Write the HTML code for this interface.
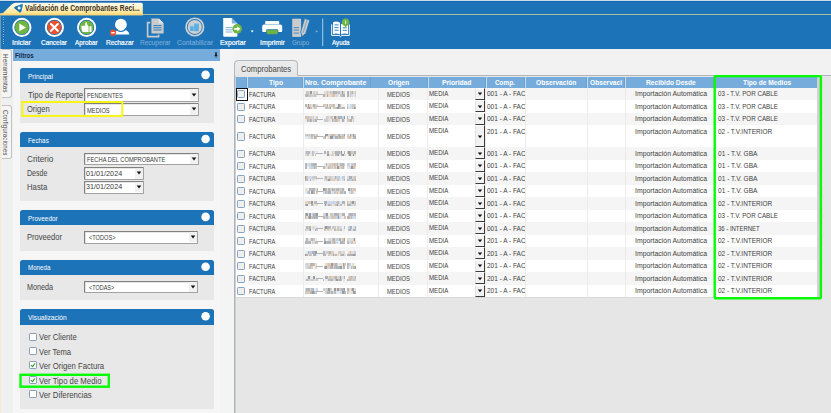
<!DOCTYPE html><html><head><meta charset="utf-8"><title>Validación de Comprobantes Recibidos</title><style>
html,body{margin:0;padding:0;width:831px;height:413px;overflow:hidden;background:#f0f0f0}
body{position:relative;font-family:"Liberation Sans",sans-serif}
body>div,body>svg,body>span{position:absolute;display:block}
span.t{white-space:nowrap;line-height:1;transform-origin:0 50%}
span.c{overflow:hidden;white-space:nowrap;line-height:1}
span.c>span{display:block;line-height:1;transform-origin:0 50%;width:max-content}
span.v{white-space:nowrap;line-height:1;transform-origin:0 0;color:#4a4a4a}
</style></head><body>
<div style="left:0.00px;top:0.00px;width:831.00px;height:413.00px;background:#f2f2f2;"></div>
<div style="left:0.00px;top:0.00px;width:831.00px;height:1.00px;background:#c9dcf0;"></div>
<div style="left:0.00px;top:1.00px;width:831.00px;height:48.00px;background:#1c73b8;"></div>
<div style="left:0.00px;top:1.00px;width:831.00px;height:1.40px;background:#1667b0;"></div>
<div style="left:0.00px;top:14.00px;width:831.00px;height:1.00px;background:#a9bf9e;"></div>
<svg style="left:0;top:0" width="160" height="16" viewBox="0 0 160 16"><defs><linearGradient id="tg" x1="0" y1="0" x2="0" y2="1"><stop offset="0" stop-color="#fffdf0"/><stop offset="0.55" stop-color="#ffefb8"/><stop offset="1" stop-color="#ffdf80"/></linearGradient></defs><path d="M0.5 15.2 L0.5 14 L3 13 L11.6 4.6 Q13.4 2.8 16 2.8 L141 2.8 Q142.8 2.8 142.8 4.6 L142.8 13.6 L142.8 15.2 Z" fill="url(#tg)"/><rect x="0" y="13.4" width="143" height="1.8" fill="#ffd978"/><defs><linearGradient id="ig" x1="0" y1="1" x2="1" y2="0"><stop offset="0" stop-color="#0f5ca6"/><stop offset="1" stop-color="#2b8cc4"/></linearGradient></defs><path d="M15.2 7.6 L22 4.9 L20.3 11.6 Z" fill="url(#ig)" stroke="url(#ig)" stroke-width="2" stroke-linejoin="round"/><circle cx="19.1" cy="8" r="1.5" fill="#fff"/></svg>
<div style="left:0.00px;top:15.00px;width:1.00px;height:34.00px;background:#6a9db5;"></div>
<div style="left:0.00px;top:49.00px;width:1.20px;height:364.00px;background:#f3ecd0;"></div>
<div style="left:3px;top:17px;width:1.2px;height:29px;background:repeating-linear-gradient(to bottom,#7fb0dc 0,#7fb0dc 1px,transparent 1px,transparent 2.4px)"></div>
<svg style="left:0;top:15px" width="370" height="34" viewBox="0 15 370 34"><circle cx="21.9" cy="27.4" r="8.6" fill="none" stroke="#fff" stroke-width="1.9"/><circle cx="21.9" cy="27.4" r="6.9" fill="#6fb540"/><path d="M19.3 23.6 L26 27.4 L19.3 31.2 Z" fill="#fff"/><circle cx="54.4" cy="27.4" r="8.6" fill="none" stroke="#fff" stroke-width="1.9"/><circle cx="54.4" cy="27.4" r="6.9" fill="#e9522f"/><path d="M51 24 L57.8 30.8 M57.8 24 L51 30.8" stroke="#fff" stroke-width="2.1" stroke-linecap="round"/><circle cx="86.6" cy="27.4" r="8.6" fill="none" stroke="#fff" stroke-width="1.9"/><circle cx="86.6" cy="27.4" r="6.9" fill="#6fb540"/><path transform="translate(86.5 27.2) scale(-1.25 1.25) translate(-87 -27.4)" d="M83 26.6 h1.6 v4.6 h-1.6 z M85.3 26.8 c0.9 -0.7 1.3 -1.8 1.4 -3.4 c1.2 -0.2 1.7 0.9 1.2 2.9 h2.6 c0.8 0.2 0.9 1 0.4 1.4 c0.4 0.4 0.3 1 -0.2 1.3 c0.3 0.5 0.1 1 -0.4 1.2 c0.1 0.6 -0.3 1 -0.9 1 h-4.1 z" fill="#fff"/><circle cx="120.9" cy="24.6" r="5.9" fill="#fff"/><path d="M114.6 34.6 C115 31 117.4 29.4 120 29.4 h2 C126 29.4 128.8 31 129.4 34.6 Z" fill="#fff"/><path d="M115.4 28.3 A 6.4 6.4 0 0 0 126.4 28.3" fill="none" stroke="#1c73b8" stroke-width="1.1"/><circle cx="113" cy="32.7" r="3.1" fill="#e9522f"/><rect x="111.2" y="32.1" width="3.6" height="1.3" fill="#fff"/><path d="M151.4 18.6 h7.4 l4.8 4.6 v10.2 h-12.2 z" fill="#c9cbcd"/><path d="M158.8 18.6 v4.6 h4.8 z" fill="#e4e6e8"/><path d="M150.2 22.6 h-2.6 v14 h11 v-2" fill="none" stroke="#c9cbcd" stroke-width="1.6"/><path d="M153.4 25.6 h8.2 M153.4 27.8 h8.2 M153.4 30 h8.2" stroke="#1c73b8" stroke-width="0.9"/><circle cx="194.8" cy="27" r="8.75" fill="none" stroke="#cfd1d3" stroke-width="1.7"/><circle cx="194.8" cy="27" r="7.1" fill="#cdcfd1"/><rect x="190.1" y="26" width="3.6" height="5" fill="#5aaee2"/><ellipse cx="191.9" cy="26" rx="1.8" ry="0.7" fill="#8ccbf0"/><rect x="194.2" y="23.6" width="4.6" height="7.6" fill="#5aaee2"/><ellipse cx="196.5" cy="23.6" rx="2.3" ry="0.8" fill="#8ccbf0"/><path d="M223.2 18 h8.6 l5.6 5.4 v12.4 q0 0.9 -0.9 0.9 h-12.4 q-0.9 0 -0.9 -0.9 z" fill="#fff"/><path d="M231.8 18 v5.4 h5.6 z" fill="#1c73b8" opacity="0.55"/><path d="M225.6 27.6 h7 M225.6 29.8 h7 M225.6 32 h7" stroke="#1c73b8" stroke-width="0.8" opacity="0.7"/><circle cx="237.2" cy="28.8" r="4.8" fill="#6fb540"/><path d="M234.2 27.9 h3 v-1.7 l3.2 2.6 l-3.2 2.6 v-1.7 h-3 z" fill="#fff"/><path d="M250.6 30.6 h3.2 l-1.6 1.8 z" fill="#fff"/><path d="M266 21 h12.4 q0.8 0 0.8 0.8 v2.4 h-14 v-2.4 q0 -0.8 0.8 -0.8 z" fill="#fff"/><path d="M264 24.6 h16.4 q1.8 0 1.8 1.8 v4.6 q0 1 -1 1 h-18 q-1 0 -1 -1 v-4.6 q0 -1.8 1.8 -1.8 z" fill="#fff"/><rect x="266.4" y="29.6" width="11.6" height="4.8" rx="0.8" fill="#6fb540" stroke="#1c73b8" stroke-width="0.7"/><path d="M292.2 18.7 h8.9 v18.2 h-8.9 z" fill="#c9cbcd"/><path d="M293.6 27.6 h5.4 M293.6 30.1 h5.4 M293.6 33.1 h5.4" stroke="#1c73b8" stroke-width="0.9" opacity="0.8"/><path d="M304.6 18.4 L309.9 20.1 L305.7 33.5 L302 36.6 L300.6 31.9 Z" fill="#c9cbcd" stroke="#1c73b8" stroke-width="0.8" stroke-linejoin="round"/><path d="M307.2 19.6 L303.1 32.8" stroke="#1c73b8" stroke-width="0.8" opacity="0.55"/><path d="M315.2 30.8 h3 l-1.5 1.7 z" fill="#7fb0dc"/><rect x="322.2" y="18.5" width="1" height="27.5" fill="#a9cbe8"/><path d="M331.7 24.4 v11 h7.3 l1.5 1.2 l1.5 -1.2 h7.3 v-11" fill="none" stroke="#fff" stroke-width="1"/><path d="M333 22.2 q3.6 -1.5 7 0.6 v11.6 q-3.4 -1.7 -7 -0.4 z" fill="#fff"/><path d="M348 23.6 q-3.6 -1.5 -7 0.6 v10.2 q3.4 -1.7 7 -0.4 z" fill="#fff"/><path d="M334.4 24.9 h4.2 M334.4 27.6 h4.2 M334.4 30.2 h4.2 M342.6 27.8 h4.2 M342.6 30.3 h4.2" stroke="#1c73b8" stroke-width="0.9"/><circle cx="345.6" cy="22.3" r="3.7" fill="#6fb540"/><path d="M344 25.3 L345.6 27.4 L347.2 25.3 z" fill="#6fb540"/><rect x="345.2" y="20.4" width="0.9" height="3.6" fill="#e8f4dc"/></svg>
<div style="left:1.20px;top:49.00px;width:12.20px;height:364.00px;background:#f0f0f0;"></div>
<div style="left:1.6px;top:49.4px;width:10.2px;height:48.4px;border:1px solid #c2c2c2;border-left:none;border-radius:0 3px 3px 0;background:#f6f6f6;box-sizing:border-box"></div>
<div style="left:1.6px;top:104.6px;width:10.2px;height:54px;border:1px solid #c2c2c2;border-left:none;border-radius:0 3px 3px 0;background:#f6f6f6;box-sizing:border-box"></div>
<div style="left:13.40px;top:49.00px;width:207.00px;height:364.00px;background:#f6f6f6;"></div>
<div style="left:220.40px;top:49.00px;width:13.80px;height:364.00px;background:#f4f4f4;"></div>
<div style="left:13.40px;top:49.00px;width:207.00px;height:12.00px;background:#76acdc;"></div>
<svg style="left:212.6px;top:51.6px" width="6" height="6.75" viewBox="0 0 8 9"><path d="M2.4 0.6 h3.2 v0.8 h-0.5 v2.6 l1 1 v0.6 h-4.2 v-0.6 l1 -1 v-2.6 h-0.5 z" fill="#1a1a1a"/><rect x="3.7" y="5.6" width="0.7" height="2.6" fill="#1a1a1a"/></svg>
<div style="left:20px;top:68.2px;width:193.5px;height:14.799999999999997px;background:#1c73b8;border-radius:2.5px 2.5px 0 0"></div>
<div style="left:20.00px;top:83.00px;width:193.50px;height:40.00px;background:#e8e8e8;"></div>
<svg style="left:199px;top:68px" width="14" height="14" viewBox="0 0 14 14"><circle cx="6.6" cy="6.85" r="4.3" fill="#fff"/></svg>
<div style="left:20px;top:132.4px;width:193.5px;height:14.599999999999994px;background:#1c73b8;border-radius:2.5px 2.5px 0 0"></div>
<div style="left:20.00px;top:147.00px;width:193.50px;height:54.00px;background:#e8e8e8;"></div>
<svg style="left:199px;top:132px" width="14" height="14" viewBox="0 0 14 14"><circle cx="6.6" cy="6.95" r="4.3" fill="#fff"/></svg>
<div style="left:20px;top:210.3px;width:193.5px;height:14.699999999999989px;background:#1c73b8;border-radius:2.5px 2.5px 0 0"></div>
<div style="left:20.00px;top:225.00px;width:193.50px;height:26.00px;background:#e8e8e8;"></div>
<svg style="left:199px;top:210px" width="14" height="14" viewBox="0 0 14 14"><circle cx="6.6" cy="6.90" r="4.3" fill="#fff"/></svg>
<div style="left:20px;top:260px;width:193.5px;height:15px;background:#1c73b8;border-radius:2.5px 2.5px 0 0"></div>
<div style="left:20.00px;top:275.00px;width:193.50px;height:25.30px;background:#e8e8e8;"></div>
<svg style="left:199px;top:260px" width="14" height="14" viewBox="0 0 14 14"><circle cx="6.6" cy="6.75" r="4.3" fill="#fff"/></svg>
<div style="left:20px;top:309.3px;width:193.5px;height:15.5px;background:#1c73b8;border-radius:2.5px 2.5px 0 0"></div>
<div style="left:20.00px;top:324.80px;width:193.50px;height:84.20px;background:#e8e8e8;"></div>
<svg style="left:199px;top:310px" width="14" height="14" viewBox="0 0 14 14"><circle cx="6.6" cy="6.30" r="4.3" fill="#fff"/></svg>
<div style="left:84px;top:88px;width:115px;height:13.5px;background:#fff;box-sizing:border-box;border:1px solid #a2a2a2;border-top-color:#808080;border-left-color:#808080;border-radius:1px;box-shadow:inset 0.6px 0.6px 0 #cfcfcf"></div>
<div style="left:190.00px;top:89.40px;width:8.00px;height:10.90px;background:#f1f1f1;"></div>
<svg style="left:191.00px;top:92.55px" width="6" height="4" viewBox="0 0 6 4"><path d="M0.7 0.6 h4.6 l-2.3 2.8 z" fill="#111"/></svg>
<div style="left:84px;top:103px;width:115px;height:13.299999999999997px;background:#fff;box-sizing:border-box;border:1px solid #a2a2a2;border-top-color:#808080;border-left-color:#808080;border-radius:1px;box-shadow:inset 0.6px 0.6px 0 #cfcfcf"></div>
<div style="left:190.00px;top:104.40px;width:8.00px;height:10.70px;background:#f1f1f1;"></div>
<svg style="left:191.00px;top:107.45px" width="6" height="4" viewBox="0 0 6 4"><path d="M0.7 0.6 h4.6 l-2.3 2.8 z" fill="#111"/></svg>
<div style="left:84px;top:153px;width:115px;height:12.400000000000006px;background:#fff;box-sizing:border-box;border:1px solid #a2a2a2;border-top-color:#808080;border-left-color:#808080;border-radius:1px;box-shadow:inset 0.6px 0.6px 0 #cfcfcf"></div>
<div style="left:190.00px;top:154.40px;width:8.00px;height:9.80px;background:#f1f1f1;"></div>
<svg style="left:191.00px;top:157.00px" width="6" height="4" viewBox="0 0 6 4"><path d="M0.7 0.6 h4.6 l-2.3 2.8 z" fill="#111"/></svg>
<div style="left:84px;top:167.2px;width:59.599999999999994px;height:12.600000000000023px;background:#fff;box-sizing:border-box;border:1px solid #a2a2a2;border-top-color:#808080;border-left-color:#808080;border-radius:1px;box-shadow:inset 0.6px 0.6px 0 #cfcfcf"></div>
<div style="left:134.60px;top:168.60px;width:8.00px;height:10.00px;background:#f1f1f1;"></div>
<svg style="left:135.60px;top:171.30px" width="6" height="4" viewBox="0 0 6 4"><path d="M0.7 0.6 h4.6 l-2.3 2.8 z" fill="#111"/></svg>
<div style="left:84px;top:180.8px;width:59.599999999999994px;height:12.899999999999977px;background:#fff;box-sizing:border-box;border:1px solid #a2a2a2;border-top-color:#808080;border-left-color:#808080;border-radius:1px;box-shadow:inset 0.6px 0.6px 0 #cfcfcf"></div>
<div style="left:134.60px;top:182.20px;width:8.00px;height:10.30px;background:#f1f1f1;"></div>
<svg style="left:135.60px;top:185.05px" width="6" height="4" viewBox="0 0 6 4"><path d="M0.7 0.6 h4.6 l-2.3 2.8 z" fill="#111"/></svg>
<div style="left:84px;top:230.5px;width:114px;height:13.199999999999989px;background:#fff;box-sizing:border-box;border:1px solid #a2a2a2;border-top-color:#808080;border-left-color:#808080;border-radius:1px;box-shadow:inset 0.6px 0.6px 0 #cfcfcf"></div>
<div style="left:189.00px;top:231.90px;width:8.00px;height:10.60px;background:#f1f1f1;"></div>
<svg style="left:190.00px;top:234.90px" width="6" height="4" viewBox="0 0 6 4"><path d="M0.7 0.6 h4.6 l-2.3 2.8 z" fill="#111"/></svg>
<div style="left:84px;top:280.5px;width:114px;height:12.899999999999977px;background:#fff;box-sizing:border-box;border:1px solid #a2a2a2;border-top-color:#808080;border-left-color:#808080;border-radius:1px;box-shadow:inset 0.6px 0.6px 0 #cfcfcf"></div>
<div style="left:189.00px;top:281.90px;width:8.00px;height:10.30px;background:#f1f1f1;"></div>
<svg style="left:190.00px;top:284.75px" width="6" height="4" viewBox="0 0 6 4"><path d="M0.7 0.6 h4.6 l-2.3 2.8 z" fill="#111"/></svg>
<svg style="left:18px;top:98px" width="110" height="24" viewBox="18 98 110 24"><rect x="22.3" y="102" width="100" height="13.9" fill="none" stroke="#f8f416" stroke-width="2"/></svg>
<div style="left:28.6px;top:332.79999999999995px;width:8px;height:8px;box-sizing:border-box;border:1px solid #8a9db8;border-radius:1.2px;background:#fff"></div>
<div style="left:28.6px;top:347.09999999999997px;width:8px;height:8px;box-sizing:border-box;border:1px solid #8a9db8;border-radius:1.2px;background:#fff"></div>
<div style="left:28.6px;top:361.4px;width:8px;height:8px;box-sizing:border-box;border:1px solid #8a9db8;border-radius:1.2px;background:#fff"></div><svg style="left:28.6px;top:361.4px" width="8" height="8" viewBox="0 0 8 8"><path d="M2 4.2 L3.5 5.7 L6 2.5" fill="none" stroke="#2f9e2f" stroke-width="1.2"/></svg>
<div style="left:28.6px;top:376.2px;width:8px;height:8px;box-sizing:border-box;border:1px solid #8a9db8;border-radius:1.2px;background:#fff"></div><svg style="left:28.6px;top:376.2px" width="8" height="8" viewBox="0 0 8 8"><path d="M2 4.2 L3.5 5.7 L6 2.5" fill="none" stroke="#2f9e2f" stroke-width="1.2"/></svg>
<div style="left:28.6px;top:389.9px;width:8px;height:8px;box-sizing:border-box;border:1px solid #8a9db8;border-radius:1.2px;background:#fff"></div>
<svg style="left:16px;top:370px" width="100" height="22" viewBox="16 370 100 22"><rect x="20.5" y="374.8" width="88.3" height="11.9" fill="none" stroke="#06fb06" stroke-width="2.4"/></svg>
<div style="left:234.00px;top:75.40px;width:597.00px;height:337.60px;background:#e6e6e6;"></div>
<div style="left:234.20px;top:74.60px;width:596.80px;height:1.00px;background:#b0b5ba;"></div>
<div style="left:234.20px;top:75.00px;width:1.00px;height:338.00px;background:#adb3b8;"></div>
<div style="left:235.20px;top:75.60px;width:0.60px;height:337.40px;background:#cdd0d3;"></div>
<div style="left:234.2px;top:60px;width:63.8px;height:16px;box-sizing:border-box;border:1px solid #b2b8bc;border-bottom:none;border-radius:4.5px 4.5px 0 0;background:linear-gradient(#ececec,#e6e6e6)"></div>
<div style="left:236.00px;top:77.00px;width:581.40px;height:220.20px;background:#fff;"></div>
<div style="left:817.40px;top:77.00px;width:2.40px;height:220.20px;background:#d3d1d3;"></div>
<div style="left:236.00px;top:297.20px;width:584.00px;height:0.80px;background:#d8d8d8;"></div>
<div style="left:236.00px;top:77.00px;width:581.40px;height:10.70px;background:#76acdc;"></div>
<div style="left:247.10px;top:77.40px;width:1.00px;height:10.30px;background:#c6dbef;"></div>
<div style="left:246.20px;top:77.40px;width:0.90px;height:10.30px;background:#6a9fd0;"></div>
<div style="left:302.90px;top:77.40px;width:1.00px;height:10.30px;background:#c6dbef;"></div>
<div style="left:302.00px;top:77.40px;width:0.90px;height:10.30px;background:#6a9fd0;"></div>
<div style="left:370.40px;top:77.40px;width:1.00px;height:10.30px;background:#c6dbef;"></div>
<div style="left:369.50px;top:77.40px;width:0.90px;height:10.30px;background:#6a9fd0;"></div>
<div style="left:427.70px;top:77.40px;width:1.00px;height:10.30px;background:#c6dbef;"></div>
<div style="left:426.80px;top:77.40px;width:0.90px;height:10.30px;background:#6a9fd0;"></div>
<div style="left:485.50px;top:77.40px;width:1.00px;height:10.30px;background:#c6dbef;"></div>
<div style="left:484.60px;top:77.40px;width:0.90px;height:10.30px;background:#6a9fd0;"></div>
<div style="left:524.50px;top:77.40px;width:1.00px;height:10.30px;background:#c6dbef;"></div>
<div style="left:523.60px;top:77.40px;width:0.90px;height:10.30px;background:#6a9fd0;"></div>
<div style="left:586.90px;top:77.40px;width:1.00px;height:10.30px;background:#c6dbef;"></div>
<div style="left:586.00px;top:77.40px;width:0.90px;height:10.30px;background:#6a9fd0;"></div>
<div style="left:624.60px;top:77.40px;width:1.00px;height:10.30px;background:#c6dbef;"></div>
<div style="left:623.70px;top:77.40px;width:0.90px;height:10.30px;background:#6a9fd0;"></div>
<div style="left:714.30px;top:77.40px;width:1.00px;height:10.30px;background:#c6dbef;"></div>
<div style="left:713.40px;top:77.40px;width:0.90px;height:10.30px;background:#6a9fd0;"></div>
<div style="left:247.60px;top:87.70px;width:569.80px;height:12.50px;background:#f5f5f5;"></div>
<div style="left:237.1px;top:90.05px;width:8.4px;height:8.4px;box-sizing:border-box;border:1px solid #86a3c6;border-radius:1.2px;background:#efefec"></div>
<div style="left:475.4px;top:87.80px;width:9.6px;height:11.80px;box-sizing:border-box;background:#f2f2f2;border-right:1px solid #3c3c3c;border-bottom:1px solid #3c3c3c;border-top:0.6px solid #fff;border-left:0.6px solid #e2e2e2"></div>
<svg style="left:477.4px;top:92.45px" width="6" height="4" viewBox="0 0 6 4"><path d="M0.8 0.6 h4.4 l-2.2 2.7 z" fill="#111"/></svg>
<div style="left:305px;top:91.25px;width:51px;height:3.0px;opacity:0.85;background:linear-gradient(90deg,#dfe6ee 0.0px,#dfe6ee 1.3px,#c9c0b4 1.3px,#c9c0b4 2.5px,#c9c0b4 2.5px,#c9c0b4 4.1px,#e6d6c2 4.1px,#e6d6c2 5.2px,#8a8a8a 5.2px,#8a8a8a 7.1px,#eeeeee 7.1px,#eeeeee 8.5px,#b8c8dc 8.5px,#b8c8dc 9.7px,#dfe6ee 9.7px,#dfe6ee 11.3px,#d8c8b8 11.3px,#d8c8b8 12.8px,transparent 12.8px,transparent 14.7px,transparent 14.7px,transparent 16.0px,transparent 16.0px,transparent 17.2px,transparent 17.2px,transparent 19.1px,#e6d6c2 19.1px,#e6d6c2 20.6px,#c6d8ec 20.6px,#c6d8ec 22.3px,#c9c0b4 22.3px,#c9c0b4 23.5px,#e6d6c2 23.5px,#e6d6c2 24.7px,#d4b8a0 24.7px,#d4b8a0 26.5px,#b8c8dc 26.5px,#b8c8dc 28.1px,#a8a8a8 28.1px,#a8a8a8 30.0px,#a8a8a8 30.0px,#a8a8a8 31.7px,#c9c0b4 31.7px,#c9c0b4 33.2px,#b0b0b0 33.2px,#b0b0b0 34.7px,#c6d8ec 34.7px,#c6d8ec 36.6px,#8a8a8a 36.6px,#8a8a8a 37.7px,#d8c8b8 37.7px,#d8c8b8 39.0px,#d8c8b8 39.0px,#d8c8b8 40.5px,transparent 40.5px,transparent 42.4px,#a8a8a8 42.4px,#a8a8a8 43.8px,#dfe6ee 43.8px,#dfe6ee 45.5px,#c9c0b4 45.5px,#c9c0b4 47.1px,#9ca8b6 47.1px,#9ca8b6 48.4px,#e6d6c2 48.4px,#e6d6c2 50.1px,#c9c0b4 50.1px,#c9c0b4 52.0px)"></div><div style="left:305px;top:94.15px;width:51px;height:2.8px;opacity:0.85;background:linear-gradient(90deg,#b0b0b0 0.0px,#b0b0b0 1.7px,#9ca8b6 1.7px,#9ca8b6 3.4px,#c9c0b4 3.4px,#c9c0b4 5.4px,#b8c8dc 5.4px,#b8c8dc 7.0px,#d8c8b8 7.0px,#d8c8b8 8.7px,#c9c0b4 8.7px,#c9c0b4 10.6px,#c6d8ec 10.6px,#c6d8ec 11.9px,transparent 11.9px,transparent 13.0px,transparent 13.0px,transparent 14.9px,transparent 14.9px,transparent 16.9px,transparent 16.9px,transparent 18.1px,#a8a8a8 18.1px,#a8a8a8 19.9px,#e6d6c2 19.9px,#e6d6c2 21.8px,#a8a8a8 21.8px,#a8a8a8 23.2px,#e6d6c2 23.2px,#e6d6c2 25.1px,#e6d6c2 25.1px,#e6d6c2 26.7px,#c9c0b4 26.7px,#c9c0b4 28.2px,#d4b8a0 28.2px,#d4b8a0 29.5px,#e6d6c2 29.5px,#e6d6c2 31.1px,#c6d8ec 31.1px,#c6d8ec 32.5px,#dfe6ee 32.5px,#dfe6ee 33.7px,#eeeeee 33.7px,#eeeeee 34.8px,#d4b8a0 34.8px,#d4b8a0 36.8px,#b0b0b0 36.8px,#b0b0b0 38.4px,#9ca8b6 38.4px,#9ca8b6 40.2px,transparent 40.2px,transparent 41.5px,#a8a8a8 41.5px,#a8a8a8 43.5px,#dfe6ee 43.5px,#dfe6ee 44.9px,#c9c0b4 44.9px,#c9c0b4 46.4px,#c6d8ec 46.4px,#c6d8ec 48.1px,#dfe6ee 48.1px,#dfe6ee 49.8px,#d8c8b8 49.8px,#d8c8b8 51.1px)"></div><div style="left:316px;top:93.75px;width:7px;height:0.9px;background:#b4b4b4"></div>
<div style="left:237.1px;top:102.55px;width:8.4px;height:8.4px;box-sizing:border-box;border:1px solid #86a3c6;border-radius:1.2px;background:#efefec"></div>
<div style="left:475.4px;top:100.30px;width:9.6px;height:11.80px;box-sizing:border-box;background:#f2f2f2;border-right:1px solid #3c3c3c;border-bottom:1px solid #3c3c3c;border-top:0.6px solid #fff;border-left:0.6px solid #e2e2e2"></div>
<svg style="left:477.4px;top:104.95px" width="6" height="4" viewBox="0 0 6 4"><path d="M0.8 0.6 h4.4 l-2.2 2.7 z" fill="#111"/></svg>
<div style="left:305px;top:103.75px;width:51px;height:3.0px;opacity:0.85;background:linear-gradient(90deg,#a8a8a8 0.0px,#a8a8a8 1.6px,#e6d6c2 1.6px,#e6d6c2 3.1px,#8a8a8a 3.1px,#8a8a8a 4.4px,#d8c8b8 4.4px,#d8c8b8 6.3px,#e6d6c2 6.3px,#e6d6c2 8.1px,#9ca8b6 8.1px,#9ca8b6 9.7px,#b8c8dc 9.7px,#b8c8dc 10.8px,#e6d6c2 10.8px,#e6d6c2 12.8px,transparent 12.8px,transparent 14.3px,transparent 14.3px,transparent 15.5px,transparent 15.5px,transparent 17.0px,transparent 17.0px,transparent 18.4px,#d4b8a0 18.4px,#d4b8a0 20.3px,#d8c8b8 20.3px,#d8c8b8 21.8px,#9ca8b6 21.8px,#9ca8b6 23.2px,#eeeeee 23.2px,#eeeeee 24.4px,#c9c0b4 24.4px,#c9c0b4 26.4px,#c9c0b4 26.4px,#c9c0b4 27.8px,#b0b0b0 27.8px,#b0b0b0 28.9px,#d4b8a0 28.9px,#d4b8a0 30.2px,#eeeeee 30.2px,#eeeeee 31.8px,#dfe6ee 31.8px,#dfe6ee 33.1px,#8a8a8a 33.1px,#8a8a8a 34.6px,#c9c0b4 34.6px,#c9c0b4 35.8px,#dfe6ee 35.8px,#dfe6ee 37.2px,#eeeeee 37.2px,#eeeeee 38.4px,#eeeeee 38.4px,#eeeeee 40.4px,transparent 40.4px,transparent 41.5px,#c9c0b4 41.5px,#c9c0b4 43.1px,#dfe6ee 43.1px,#dfe6ee 44.8px,#c6d8ec 44.8px,#c6d8ec 46.7px,#c9c0b4 46.7px,#c9c0b4 48.0px,#c9c0b4 48.0px,#c9c0b4 49.9px,#c6d8ec 49.9px,#c6d8ec 51.1px)"></div><div style="left:305px;top:106.65px;width:51px;height:2.8px;opacity:0.85;background:linear-gradient(90deg,#eeeeee 0.0px,#eeeeee 1.5px,#a8a8a8 1.5px,#a8a8a8 3.5px,#8a8a8a 3.5px,#8a8a8a 5.4px,#d4b8a0 5.4px,#d4b8a0 6.7px,#dfe6ee 6.7px,#dfe6ee 8.0px,#c6d8ec 8.0px,#c6d8ec 9.2px,#d4b8a0 9.2px,#d4b8a0 10.6px,#d8c8b8 10.6px,#d8c8b8 11.8px,transparent 11.8px,transparent 13.8px,transparent 13.8px,transparent 15.0px,transparent 15.0px,transparent 16.3px,transparent 16.3px,transparent 18.1px,#eeeeee 18.1px,#eeeeee 19.5px,#b8c8dc 19.5px,#b8c8dc 20.6px,#9ca8b6 20.6px,#9ca8b6 21.7px,#d4b8a0 21.7px,#d4b8a0 23.0px,#c9c0b4 23.0px,#c9c0b4 24.5px,#8a8a8a 24.5px,#8a8a8a 25.8px,#eeeeee 25.8px,#eeeeee 27.5px,#d4b8a0 27.5px,#d4b8a0 29.3px,#c9c0b4 29.3px,#c9c0b4 30.8px,#b0b0b0 30.8px,#b0b0b0 32.4px,#8a8a8a 32.4px,#8a8a8a 33.9px,#b0b0b0 33.9px,#b0b0b0 35.8px,#c9c0b4 35.8px,#c9c0b4 37.3px,#a8a8a8 37.3px,#a8a8a8 38.7px,#b0b0b0 38.7px,#b0b0b0 40.3px,transparent 40.3px,transparent 41.9px,#a8a8a8 41.9px,#a8a8a8 43.0px,#e6d6c2 43.0px,#e6d6c2 44.9px,#c6d8ec 44.9px,#c6d8ec 46.4px,#c6d8ec 46.4px,#c6d8ec 47.5px,#c9c0b4 47.5px,#c9c0b4 48.8px,#8a8a8a 48.8px,#8a8a8a 50.3px,#a8a8a8 50.3px,#a8a8a8 51.5px)"></div><div style="left:316px;top:106.25px;width:7px;height:0.9px;background:#b4b4b4"></div>
<div style="left:247.60px;top:112.70px;width:569.80px;height:12.50px;background:#f5f5f5;"></div>
<div style="left:237.1px;top:115.05px;width:8.4px;height:8.4px;box-sizing:border-box;border:1px solid #86a3c6;border-radius:1.2px;background:#efefec"></div>
<div style="left:475.4px;top:112.80px;width:9.6px;height:11.80px;box-sizing:border-box;background:#f2f2f2;border-right:1px solid #3c3c3c;border-bottom:1px solid #3c3c3c;border-top:0.6px solid #fff;border-left:0.6px solid #e2e2e2"></div>
<svg style="left:477.4px;top:117.45px" width="6" height="4" viewBox="0 0 6 4"><path d="M0.8 0.6 h4.4 l-2.2 2.7 z" fill="#111"/></svg>
<div style="left:305px;top:116.25px;width:51px;height:3.0px;opacity:0.85;background:linear-gradient(90deg,#d4b8a0 0.0px,#d4b8a0 1.6px,#d4b8a0 1.6px,#d4b8a0 3.5px,#b8c8dc 3.5px,#b8c8dc 4.8px,#d8c8b8 4.8px,#d8c8b8 6.5px,#e6d6c2 6.5px,#e6d6c2 7.9px,#b8c8dc 7.9px,#b8c8dc 9.2px,#dfe6ee 9.2px,#dfe6ee 10.7px,#d8c8b8 10.7px,#d8c8b8 12.5px,transparent 12.5px,transparent 14.4px,transparent 14.4px,transparent 16.3px,transparent 16.3px,transparent 17.8px,transparent 17.8px,transparent 19.8px,#eeeeee 19.8px,#eeeeee 20.9px,#b8c8dc 20.9px,#b8c8dc 22.2px,#d8c8b8 22.2px,#d8c8b8 23.7px,#dfe6ee 23.7px,#dfe6ee 25.0px,#b8c8dc 25.0px,#b8c8dc 26.2px,#d4b8a0 26.2px,#d4b8a0 27.9px,#dfe6ee 27.9px,#dfe6ee 29.4px,#8a8a8a 29.4px,#8a8a8a 31.3px,#c9c0b4 31.3px,#c9c0b4 33.0px,#a8a8a8 33.0px,#a8a8a8 34.2px,#9ca8b6 34.2px,#9ca8b6 36.1px,#9ca8b6 36.1px,#9ca8b6 37.2px,#b8c8dc 37.2px,#b8c8dc 38.8px,#8a8a8a 38.8px,#8a8a8a 40.2px,transparent 40.2px,transparent 41.7px,#a8a8a8 41.7px,#a8a8a8 43.5px,#dfe6ee 43.5px,#dfe6ee 44.8px,#eeeeee 44.8px,#eeeeee 46.1px,#9ca8b6 46.1px,#9ca8b6 47.6px,#c6d8ec 47.6px,#c6d8ec 48.8px,#eeeeee 48.8px,#eeeeee 50.6px,transparent 50.6px,transparent 52.4px)"></div><div style="left:305px;top:119.15px;width:51px;height:2.8px;opacity:0.85;background:linear-gradient(90deg,#dfe6ee 0.0px,#dfe6ee 1.8px,#b0b0b0 1.8px,#b0b0b0 3.4px,#d4b8a0 3.4px,#d4b8a0 4.8px,#9ca8b6 4.8px,#9ca8b6 6.7px,#c6d8ec 6.7px,#c6d8ec 7.9px,#c9c0b4 7.9px,#c9c0b4 9.9px,#9ca8b6 9.9px,#9ca8b6 11.7px,transparent 11.7px,transparent 12.8px,transparent 12.8px,transparent 14.6px,transparent 14.6px,transparent 16.0px,transparent 16.0px,transparent 17.5px,transparent 17.5px,transparent 18.8px,#b8c8dc 18.8px,#b8c8dc 20.5px,#d4b8a0 20.5px,#d4b8a0 21.8px,#b8c8dc 21.8px,#b8c8dc 23.0px,#e6d6c2 23.0px,#e6d6c2 24.9px,#dfe6ee 24.9px,#dfe6ee 26.5px,#a8a8a8 26.5px,#a8a8a8 28.2px,#c9c0b4 28.2px,#c9c0b4 29.8px,#b0b0b0 29.8px,#b0b0b0 31.6px,#d4b8a0 31.6px,#d4b8a0 32.9px,#d8c8b8 32.9px,#d8c8b8 34.9px,#eeeeee 34.9px,#eeeeee 36.1px,#dfe6ee 36.1px,#dfe6ee 37.2px,#9ca8b6 37.2px,#9ca8b6 38.6px,#e6d6c2 38.6px,#e6d6c2 40.4px,transparent 40.4px,transparent 41.7px,#b8c8dc 41.7px,#b8c8dc 43.1px,#d4b8a0 43.1px,#d4b8a0 44.9px,#a8a8a8 44.9px,#a8a8a8 46.6px,#dfe6ee 46.6px,#dfe6ee 48.1px,#d8c8b8 48.1px,#d8c8b8 49.3px,#eeeeee 49.3px,#eeeeee 51.3px)"></div><div style="left:316px;top:118.75px;width:7px;height:0.9px;background:#b4b4b4"></div>
<div style="left:237.1px;top:132.29999999999998px;width:8.4px;height:8.4px;box-sizing:border-box;border:1px solid #86a3c6;border-radius:1.2px;background:#efefec"></div>
<div style="left:475.4px;top:125.30px;width:9.6px;height:21.30px;box-sizing:border-box;background:#f2f2f2;border-right:1px solid #3c3c3c;border-bottom:1px solid #3c3c3c;border-top:0.6px solid #fff;border-left:0.6px solid #e2e2e2"></div>
<svg style="left:477.4px;top:134.70px" width="6" height="4" viewBox="0 0 6 4"><path d="M0.8 0.6 h4.4 l-2.2 2.7 z" fill="#111"/></svg>
<div style="left:305px;top:133.50px;width:51px;height:3.0px;opacity:0.85;background:linear-gradient(90deg,#c9c0b4 0.0px,#c9c0b4 1.7px,#b0b0b0 1.7px,#b0b0b0 3.0px,#d8c8b8 3.0px,#d8c8b8 4.3px,#b8c8dc 4.3px,#b8c8dc 6.0px,#b0b0b0 6.0px,#b0b0b0 7.8px,#d4b8a0 7.8px,#d4b8a0 9.6px,#e6d6c2 9.6px,#e6d6c2 11.4px,#b8c8dc 11.4px,#b8c8dc 12.9px,transparent 12.9px,transparent 14.8px,transparent 14.8px,transparent 16.0px,transparent 16.0px,transparent 17.6px,transparent 17.6px,transparent 19.6px,#8a8a8a 19.6px,#8a8a8a 21.3px,#8a8a8a 21.3px,#8a8a8a 23.1px,#c6d8ec 23.1px,#c6d8ec 25.0px,#d4b8a0 25.0px,#d4b8a0 26.7px,#b0b0b0 26.7px,#b0b0b0 28.6px,#d4b8a0 28.6px,#d4b8a0 30.3px,#d8c8b8 30.3px,#d8c8b8 31.5px,#e6d6c2 31.5px,#e6d6c2 32.9px,#9ca8b6 32.9px,#9ca8b6 34.8px,#b8c8dc 34.8px,#b8c8dc 36.2px,#c6d8ec 36.2px,#c6d8ec 37.4px,#c9c0b4 37.4px,#c9c0b4 38.7px,#8a8a8a 38.7px,#8a8a8a 40.5px,transparent 40.5px,transparent 42.4px,#b8c8dc 42.4px,#b8c8dc 43.7px,#eeeeee 43.7px,#eeeeee 45.1px,#8a8a8a 45.1px,#8a8a8a 46.3px,#d8c8b8 46.3px,#d8c8b8 48.1px,#8a8a8a 48.1px,#8a8a8a 49.3px,#c9c0b4 49.3px,#c9c0b4 50.6px,transparent 50.6px,transparent 52.6px)"></div><div style="left:305px;top:136.40px;width:51px;height:2.8px;opacity:0.85;background:linear-gradient(90deg,#dfe6ee 0.0px,#dfe6ee 1.2px,#dfe6ee 1.2px,#dfe6ee 2.6px,#dfe6ee 2.6px,#dfe6ee 4.3px,#c6d8ec 4.3px,#c6d8ec 6.2px,#d4b8a0 6.2px,#d4b8a0 7.8px,#dfe6ee 7.8px,#dfe6ee 9.2px,#a8a8a8 9.2px,#a8a8a8 10.9px,#d4b8a0 10.9px,#d4b8a0 12.2px,transparent 12.2px,transparent 13.6px,transparent 13.6px,transparent 15.2px,transparent 15.2px,transparent 17.0px,transparent 17.0px,transparent 18.3px,#c9c0b4 18.3px,#c9c0b4 19.6px,#9ca8b6 19.6px,#9ca8b6 21.4px,#eeeeee 21.4px,#eeeeee 23.3px,#e6d6c2 23.3px,#e6d6c2 25.2px,#8a8a8a 25.2px,#8a8a8a 26.4px,#8a8a8a 26.4px,#8a8a8a 28.1px,#c6d8ec 28.1px,#c6d8ec 29.6px,#9ca8b6 29.6px,#9ca8b6 30.8px,#a8a8a8 30.8px,#a8a8a8 32.5px,#c9c0b4 32.5px,#c9c0b4 34.1px,#a8a8a8 34.1px,#a8a8a8 35.7px,#d4b8a0 35.7px,#d4b8a0 37.5px,#d4b8a0 37.5px,#d4b8a0 38.9px,#b8c8dc 38.9px,#b8c8dc 40.1px,transparent 40.1px,transparent 42.0px,#d8c8b8 42.0px,#d8c8b8 43.9px,#d4b8a0 43.9px,#d4b8a0 45.7px,#e6d6c2 45.7px,#e6d6c2 47.6px,#a8a8a8 47.6px,#a8a8a8 49.3px,#a8a8a8 49.3px,#a8a8a8 50.8px,transparent 50.8px,transparent 52.7px)"></div><div style="left:316px;top:136.00px;width:7px;height:0.9px;background:#b4b4b4"></div>
<div style="left:247.60px;top:147.20px;width:569.80px;height:12.50px;background:#f5f5f5;"></div>
<div style="left:237.1px;top:149.54999999999998px;width:8.4px;height:8.4px;box-sizing:border-box;border:1px solid #86a3c6;border-radius:1.2px;background:#efefec"></div>
<div style="left:475.4px;top:147.30px;width:9.6px;height:11.80px;box-sizing:border-box;background:#f2f2f2;border-right:1px solid #3c3c3c;border-bottom:1px solid #3c3c3c;border-top:0.6px solid #fff;border-left:0.6px solid #e2e2e2"></div>
<svg style="left:477.4px;top:151.95px" width="6" height="4" viewBox="0 0 6 4"><path d="M0.8 0.6 h4.4 l-2.2 2.7 z" fill="#111"/></svg>
<div style="left:305px;top:150.75px;width:51px;height:3.0px;opacity:0.85;background:linear-gradient(90deg,#c6d8ec 0.0px,#c6d8ec 1.1px,#b0b0b0 1.1px,#b0b0b0 2.9px,#b0b0b0 2.9px,#b0b0b0 4.6px,#dfe6ee 4.6px,#dfe6ee 6.6px,#b0b0b0 6.6px,#b0b0b0 7.9px,#b8c8dc 7.9px,#b8c8dc 9.1px,#e6d6c2 9.1px,#e6d6c2 10.2px,#dfe6ee 10.2px,#dfe6ee 11.5px,#dfe6ee 11.5px,#dfe6ee 13.2px,transparent 13.2px,transparent 14.7px,transparent 14.7px,transparent 16.7px,transparent 16.7px,transparent 17.9px,transparent 17.9px,transparent 19.0px,#a8a8a8 19.0px,#a8a8a8 20.9px,#eeeeee 20.9px,#eeeeee 22.3px,#9ca8b6 22.3px,#9ca8b6 23.7px,#eeeeee 23.7px,#eeeeee 25.4px,#eeeeee 25.4px,#eeeeee 26.7px,#d8c8b8 26.7px,#d8c8b8 28.1px,#e6d6c2 28.1px,#e6d6c2 29.7px,#9ca8b6 29.7px,#9ca8b6 31.6px,#b0b0b0 31.6px,#b0b0b0 32.8px,#a8a8a8 32.8px,#a8a8a8 34.7px,#b8c8dc 34.7px,#b8c8dc 35.8px,#8a8a8a 35.8px,#8a8a8a 37.4px,#eeeeee 37.4px,#eeeeee 39.1px,#a8a8a8 39.1px,#a8a8a8 40.3px,transparent 40.3px,transparent 42.1px,#d8c8b8 42.1px,#d8c8b8 43.4px,#8a8a8a 43.4px,#8a8a8a 45.2px,#9ca8b6 45.2px,#9ca8b6 46.3px,#c9c0b4 46.3px,#c9c0b4 47.7px,#d8c8b8 47.7px,#d8c8b8 49.2px,#9ca8b6 49.2px,#9ca8b6 50.9px,transparent 50.9px,transparent 52.8px)"></div><div style="left:305px;top:153.65px;width:51px;height:2.8px;opacity:0.85;background:linear-gradient(90deg,#c6d8ec 0.0px,#c6d8ec 2.0px,#d4b8a0 2.0px,#d4b8a0 3.8px,#dfe6ee 3.8px,#dfe6ee 5.7px,#dfe6ee 5.7px,#dfe6ee 7.4px,#d4b8a0 7.4px,#d4b8a0 9.2px,#eeeeee 9.2px,#eeeeee 10.4px,#c9c0b4 10.4px,#c9c0b4 11.5px,transparent 11.5px,transparent 13.0px,transparent 13.0px,transparent 14.9px,transparent 14.9px,transparent 16.6px,transparent 16.6px,transparent 18.0px,transparent 18.0px,transparent 19.4px,#eeeeee 19.4px,#eeeeee 21.2px,#eeeeee 21.2px,#eeeeee 22.4px,#8a8a8a 22.4px,#8a8a8a 24.2px,#e6d6c2 24.2px,#e6d6c2 25.7px,#c6d8ec 25.7px,#c6d8ec 27.3px,#d8c8b8 27.3px,#d8c8b8 28.6px,#eeeeee 28.6px,#eeeeee 29.8px,#b0b0b0 29.8px,#b0b0b0 31.1px,#b0b0b0 31.1px,#b0b0b0 32.9px,#8a8a8a 32.9px,#8a8a8a 34.4px,#dfe6ee 34.4px,#dfe6ee 36.1px,#9ca8b6 36.1px,#9ca8b6 37.4px,#8a8a8a 37.4px,#8a8a8a 39.4px,#e6d6c2 39.4px,#e6d6c2 41.1px,transparent 41.1px,transparent 42.9px,#b8c8dc 42.9px,#b8c8dc 44.5px,#8a8a8a 44.5px,#8a8a8a 46.1px,#e6d6c2 46.1px,#e6d6c2 48.1px,#8a8a8a 48.1px,#8a8a8a 49.4px,#e6d6c2 49.4px,#e6d6c2 50.8px,transparent 50.8px,transparent 52.0px)"></div><div style="left:316px;top:153.25px;width:7px;height:0.9px;background:#b4b4b4"></div>
<div style="left:237.1px;top:162.04999999999998px;width:8.4px;height:8.4px;box-sizing:border-box;border:1px solid #86a3c6;border-radius:1.2px;background:#efefec"></div>
<div style="left:475.4px;top:159.80px;width:9.6px;height:11.80px;box-sizing:border-box;background:#f2f2f2;border-right:1px solid #3c3c3c;border-bottom:1px solid #3c3c3c;border-top:0.6px solid #fff;border-left:0.6px solid #e2e2e2"></div>
<svg style="left:477.4px;top:164.45px" width="6" height="4" viewBox="0 0 6 4"><path d="M0.8 0.6 h4.4 l-2.2 2.7 z" fill="#111"/></svg>
<div style="left:305px;top:163.25px;width:51px;height:3.0px;opacity:0.85;background:linear-gradient(90deg,#a8a8a8 0.0px,#a8a8a8 1.7px,#c6d8ec 1.7px,#c6d8ec 3.5px,#b8c8dc 3.5px,#b8c8dc 4.6px,#e6d6c2 4.6px,#e6d6c2 6.1px,#b0b0b0 6.1px,#b0b0b0 7.8px,#9ca8b6 7.8px,#9ca8b6 9.4px,#9ca8b6 9.4px,#9ca8b6 10.8px,#d4b8a0 10.8px,#d4b8a0 12.4px,transparent 12.4px,transparent 13.9px,transparent 13.9px,transparent 15.9px,transparent 15.9px,transparent 17.5px,transparent 17.5px,transparent 18.8px,#dfe6ee 18.8px,#dfe6ee 20.5px,#a8a8a8 20.5px,#a8a8a8 22.0px,#e6d6c2 22.0px,#e6d6c2 23.6px,#b8c8dc 23.6px,#b8c8dc 25.0px,#d8c8b8 25.0px,#d8c8b8 26.6px,#c9c0b4 26.6px,#c9c0b4 28.5px,#b0b0b0 28.5px,#b0b0b0 30.0px,#d4b8a0 30.0px,#d4b8a0 31.6px,#b0b0b0 31.6px,#b0b0b0 32.8px,#c6d8ec 32.8px,#c6d8ec 34.7px,#a8a8a8 34.7px,#a8a8a8 35.9px,#b0b0b0 35.9px,#b0b0b0 37.3px,#a8a8a8 37.3px,#a8a8a8 38.7px,#d8c8b8 38.7px,#d8c8b8 40.2px,transparent 40.2px,transparent 41.6px,#b8c8dc 41.6px,#b8c8dc 43.0px,#b8c8dc 43.0px,#b8c8dc 44.8px,#eeeeee 44.8px,#eeeeee 46.2px,#c9c0b4 46.2px,#c9c0b4 47.8px,#b8c8dc 47.8px,#b8c8dc 49.1px,#b0b0b0 49.1px,#b0b0b0 51.1px)"></div><div style="left:305px;top:166.15px;width:51px;height:2.8px;opacity:0.85;background:linear-gradient(90deg,#a8a8a8 0.0px,#a8a8a8 1.9px,#eeeeee 1.9px,#eeeeee 3.8px,#c6d8ec 3.8px,#c6d8ec 5.6px,#b8c8dc 5.6px,#b8c8dc 6.7px,#b8c8dc 6.7px,#b8c8dc 8.7px,#9ca8b6 8.7px,#9ca8b6 10.3px,#c9c0b4 10.3px,#c9c0b4 12.2px,transparent 12.2px,transparent 14.2px,transparent 14.2px,transparent 15.5px,transparent 15.5px,transparent 16.7px,transparent 16.7px,transparent 18.2px,#b0b0b0 18.2px,#b0b0b0 19.9px,#e6d6c2 19.9px,#e6d6c2 21.6px,#e6d6c2 21.6px,#e6d6c2 23.1px,#b0b0b0 23.1px,#b0b0b0 24.4px,#c9c0b4 24.4px,#c9c0b4 26.3px,#b8c8dc 26.3px,#b8c8dc 28.0px,#e6d6c2 28.0px,#e6d6c2 29.3px,#d4b8a0 29.3px,#d4b8a0 30.7px,#e6d6c2 30.7px,#e6d6c2 32.4px,#8a8a8a 32.4px,#8a8a8a 34.2px,#d8c8b8 34.2px,#d8c8b8 36.0px,#d4b8a0 36.0px,#d4b8a0 37.9px,#a8a8a8 37.9px,#a8a8a8 39.3px,#dfe6ee 39.3px,#dfe6ee 40.5px,transparent 40.5px,transparent 41.9px,#e6d6c2 41.9px,#e6d6c2 43.2px,#dfe6ee 43.2px,#dfe6ee 44.4px,#c6d8ec 44.4px,#c6d8ec 46.4px,#8a8a8a 46.4px,#8a8a8a 47.9px,#d4b8a0 47.9px,#d4b8a0 49.6px,#e6d6c2 49.6px,#e6d6c2 51.3px)"></div><div style="left:316px;top:165.75px;width:7px;height:0.9px;background:#b4b4b4"></div>
<div style="left:247.60px;top:172.20px;width:569.80px;height:12.50px;background:#f5f5f5;"></div>
<div style="left:237.1px;top:174.54999999999998px;width:8.4px;height:8.4px;box-sizing:border-box;border:1px solid #86a3c6;border-radius:1.2px;background:#efefec"></div>
<div style="left:475.4px;top:172.30px;width:9.6px;height:11.80px;box-sizing:border-box;background:#f2f2f2;border-right:1px solid #3c3c3c;border-bottom:1px solid #3c3c3c;border-top:0.6px solid #fff;border-left:0.6px solid #e2e2e2"></div>
<svg style="left:477.4px;top:176.95px" width="6" height="4" viewBox="0 0 6 4"><path d="M0.8 0.6 h4.4 l-2.2 2.7 z" fill="#111"/></svg>
<div style="left:305px;top:175.75px;width:51px;height:3.0px;opacity:0.85;background:linear-gradient(90deg,#8a8a8a 0.0px,#8a8a8a 1.3px,#d4b8a0 1.3px,#d4b8a0 2.7px,#c6d8ec 2.7px,#c6d8ec 4.1px,#c6d8ec 4.1px,#c6d8ec 5.6px,#c6d8ec 5.6px,#c6d8ec 7.0px,#b8c8dc 7.0px,#b8c8dc 8.9px,#c9c0b4 8.9px,#c9c0b4 10.6px,#d4b8a0 10.6px,#d4b8a0 11.8px,transparent 11.8px,transparent 13.6px,transparent 13.6px,transparent 15.4px,transparent 15.4px,transparent 16.6px,transparent 16.6px,transparent 18.5px,#c6d8ec 18.5px,#c6d8ec 20.3px,#b0b0b0 20.3px,#b0b0b0 21.9px,#e6d6c2 21.9px,#e6d6c2 23.6px,#d4b8a0 23.6px,#d4b8a0 24.9px,#b8c8dc 24.9px,#b8c8dc 26.3px,#c6d8ec 26.3px,#c6d8ec 28.3px,#e6d6c2 28.3px,#e6d6c2 29.7px,#9ca8b6 29.7px,#9ca8b6 31.5px,#b8c8dc 31.5px,#b8c8dc 33.3px,#b8c8dc 33.3px,#b8c8dc 35.2px,#dfe6ee 35.2px,#dfe6ee 36.8px,#b8c8dc 36.8px,#b8c8dc 38.7px,#b8c8dc 38.7px,#b8c8dc 40.3px,transparent 40.3px,transparent 42.0px,#e6d6c2 42.0px,#e6d6c2 43.7px,#9ca8b6 43.7px,#9ca8b6 45.2px,#9ca8b6 45.2px,#9ca8b6 47.1px,#e6d6c2 47.1px,#e6d6c2 48.4px,#b8c8dc 48.4px,#b8c8dc 49.7px,#d4b8a0 49.7px,#d4b8a0 51.3px)"></div><div style="left:305px;top:178.65px;width:51px;height:2.8px;opacity:0.85;background:linear-gradient(90deg,#a8a8a8 0.0px,#a8a8a8 1.3px,#b0b0b0 1.3px,#b0b0b0 3.1px,#dfe6ee 3.1px,#dfe6ee 4.8px,#a8a8a8 4.8px,#a8a8a8 5.9px,#dfe6ee 5.9px,#dfe6ee 7.1px,#e6d6c2 7.1px,#e6d6c2 8.8px,#dfe6ee 8.8px,#dfe6ee 10.4px,#dfe6ee 10.4px,#dfe6ee 12.1px,transparent 12.1px,transparent 13.9px,transparent 13.9px,transparent 15.3px,transparent 15.3px,transparent 16.5px,transparent 16.5px,transparent 17.6px,transparent 17.6px,transparent 19.0px,#c6d8ec 19.0px,#c6d8ec 20.5px,#c9c0b4 20.5px,#c9c0b4 21.6px,#c9c0b4 21.6px,#c9c0b4 23.3px,#8a8a8a 23.3px,#8a8a8a 24.7px,#d4b8a0 24.7px,#d4b8a0 25.9px,#d8c8b8 25.9px,#d8c8b8 27.9px,#d8c8b8 27.9px,#d8c8b8 29.6px,#e6d6c2 29.6px,#e6d6c2 30.9px,#e6d6c2 30.9px,#e6d6c2 32.1px,#d4b8a0 32.1px,#d4b8a0 33.7px,#c6d8ec 33.7px,#c6d8ec 35.6px,#eeeeee 35.6px,#eeeeee 36.9px,#c6d8ec 36.9px,#c6d8ec 38.7px,#b0b0b0 38.7px,#b0b0b0 39.8px,transparent 39.8px,transparent 41.8px,#b0b0b0 41.8px,#b0b0b0 43.6px,#b8c8dc 43.6px,#b8c8dc 44.8px,#b8c8dc 44.8px,#b8c8dc 46.5px,#a8a8a8 46.5px,#a8a8a8 48.0px,#d4b8a0 48.0px,#d4b8a0 49.7px,#a8a8a8 49.7px,#a8a8a8 51.1px)"></div><div style="left:316px;top:178.25px;width:7px;height:0.9px;background:#b4b4b4"></div>
<div style="left:237.1px;top:187.04999999999998px;width:8.4px;height:8.4px;box-sizing:border-box;border:1px solid #86a3c6;border-radius:1.2px;background:#efefec"></div>
<div style="left:475.4px;top:184.80px;width:9.6px;height:11.80px;box-sizing:border-box;background:#f2f2f2;border-right:1px solid #3c3c3c;border-bottom:1px solid #3c3c3c;border-top:0.6px solid #fff;border-left:0.6px solid #e2e2e2"></div>
<svg style="left:477.4px;top:189.45px" width="6" height="4" viewBox="0 0 6 4"><path d="M0.8 0.6 h4.4 l-2.2 2.7 z" fill="#111"/></svg>
<div style="left:305px;top:188.25px;width:51px;height:3.0px;opacity:0.85;background:linear-gradient(90deg,#e6d6c2 0.0px,#e6d6c2 2.0px,#dfe6ee 2.0px,#dfe6ee 3.9px,#9ca8b6 3.9px,#9ca8b6 5.4px,#b0b0b0 5.4px,#b0b0b0 6.9px,#a8a8a8 6.9px,#a8a8a8 8.1px,#9ca8b6 8.1px,#9ca8b6 10.0px,#e6d6c2 10.0px,#e6d6c2 11.5px,#a8a8a8 11.5px,#a8a8a8 12.6px,transparent 12.6px,transparent 14.1px,transparent 14.1px,transparent 15.4px,transparent 15.4px,transparent 16.6px,transparent 16.6px,transparent 18.2px,#8a8a8a 18.2px,#8a8a8a 19.8px,#a8a8a8 19.8px,#a8a8a8 21.6px,#e6d6c2 21.6px,#e6d6c2 22.8px,#a8a8a8 22.8px,#a8a8a8 24.8px,#c9c0b4 24.8px,#c9c0b4 26.7px,#9ca8b6 26.7px,#9ca8b6 28.2px,#b0b0b0 28.2px,#b0b0b0 29.8px,#d8c8b8 29.8px,#d8c8b8 31.2px,#b0b0b0 31.2px,#b0b0b0 32.8px,#9ca8b6 32.8px,#9ca8b6 34.1px,#b8c8dc 34.1px,#b8c8dc 35.4px,#c9c0b4 35.4px,#c9c0b4 36.9px,#a8a8a8 36.9px,#a8a8a8 38.6px,#eeeeee 38.6px,#eeeeee 40.2px,transparent 40.2px,transparent 41.3px,transparent 41.3px,transparent 43.0px,#8a8a8a 43.0px,#8a8a8a 44.6px,#b8c8dc 44.6px,#b8c8dc 45.8px,#b0b0b0 45.8px,#b0b0b0 47.0px,#d8c8b8 47.0px,#d8c8b8 48.2px,#d4b8a0 48.2px,#d4b8a0 49.8px,#c9c0b4 49.8px,#c9c0b4 51.1px)"></div><div style="left:305px;top:191.15px;width:51px;height:2.8px;opacity:0.85;background:linear-gradient(90deg,#dfe6ee 0.0px,#dfe6ee 1.5px,#b8c8dc 1.5px,#b8c8dc 2.7px,#b0b0b0 2.7px,#b0b0b0 4.5px,#eeeeee 4.5px,#eeeeee 6.1px,#8a8a8a 6.1px,#8a8a8a 7.9px,#b0b0b0 7.9px,#b0b0b0 9.6px,#eeeeee 9.6px,#eeeeee 11.4px,#d8c8b8 11.4px,#d8c8b8 13.0px,transparent 13.0px,transparent 14.8px,transparent 14.8px,transparent 16.7px,transparent 16.7px,transparent 18.2px,#c6d8ec 18.2px,#c6d8ec 19.9px,#b0b0b0 19.9px,#b0b0b0 21.6px,#c9c0b4 21.6px,#c9c0b4 22.8px,#9ca8b6 22.8px,#9ca8b6 24.7px,#a8a8a8 24.7px,#a8a8a8 26.0px,#dfe6ee 26.0px,#dfe6ee 27.2px,#c6d8ec 27.2px,#c6d8ec 29.1px,#c9c0b4 29.1px,#c9c0b4 30.9px,#d8c8b8 30.9px,#d8c8b8 32.3px,#d4b8a0 32.3px,#d4b8a0 33.4px,#e6d6c2 33.4px,#e6d6c2 34.9px,#b0b0b0 34.9px,#b0b0b0 36.2px,#b0b0b0 36.2px,#b0b0b0 38.0px,#b8c8dc 38.0px,#b8c8dc 39.2px,#9ca8b6 39.2px,#9ca8b6 41.2px,transparent 41.2px,transparent 42.9px,#eeeeee 42.9px,#eeeeee 44.3px,#c6d8ec 44.3px,#c6d8ec 46.1px,#d4b8a0 46.1px,#d4b8a0 47.9px,#c6d8ec 47.9px,#c6d8ec 49.1px,#eeeeee 49.1px,#eeeeee 51.0px,transparent 51.0px,transparent 52.3px)"></div><div style="left:316px;top:190.75px;width:7px;height:0.9px;background:#b4b4b4"></div>
<div style="left:247.60px;top:197.20px;width:569.80px;height:12.50px;background:#f5f5f5;"></div>
<div style="left:237.1px;top:199.54999999999998px;width:8.4px;height:8.4px;box-sizing:border-box;border:1px solid #86a3c6;border-radius:1.2px;background:#efefec"></div>
<div style="left:475.4px;top:197.30px;width:9.6px;height:11.80px;box-sizing:border-box;background:#f2f2f2;border-right:1px solid #3c3c3c;border-bottom:1px solid #3c3c3c;border-top:0.6px solid #fff;border-left:0.6px solid #e2e2e2"></div>
<svg style="left:477.4px;top:201.95px" width="6" height="4" viewBox="0 0 6 4"><path d="M0.8 0.6 h4.4 l-2.2 2.7 z" fill="#111"/></svg>
<div style="left:305px;top:200.75px;width:51px;height:3.0px;opacity:0.85;background:linear-gradient(90deg,#d8c8b8 0.0px,#d8c8b8 1.3px,#e6d6c2 1.3px,#e6d6c2 3.3px,#d4b8a0 3.3px,#d4b8a0 4.5px,#d8c8b8 4.5px,#d8c8b8 6.2px,#8a8a8a 6.2px,#8a8a8a 7.9px,#dfe6ee 7.9px,#dfe6ee 9.3px,#b0b0b0 9.3px,#b0b0b0 10.7px,#9ca8b6 10.7px,#9ca8b6 12.4px,transparent 12.4px,transparent 14.4px,transparent 14.4px,transparent 15.7px,transparent 15.7px,transparent 17.7px,transparent 17.7px,transparent 19.3px,#9ca8b6 19.3px,#9ca8b6 20.5px,#9ca8b6 20.5px,#9ca8b6 22.1px,#e6d6c2 22.1px,#e6d6c2 23.5px,#c6d8ec 23.5px,#c6d8ec 24.8px,#c6d8ec 24.8px,#c6d8ec 26.4px,#c6d8ec 26.4px,#c6d8ec 27.7px,#b8c8dc 27.7px,#b8c8dc 29.4px,#c6d8ec 29.4px,#c6d8ec 31.1px,#c9c0b4 31.1px,#c9c0b4 33.0px,#a8a8a8 33.0px,#a8a8a8 34.2px,#c6d8ec 34.2px,#c6d8ec 35.3px,#dfe6ee 35.3px,#dfe6ee 36.8px,#9ca8b6 36.8px,#9ca8b6 38.4px,#a8a8a8 38.4px,#a8a8a8 39.9px,transparent 39.9px,transparent 41.7px,#b0b0b0 41.7px,#b0b0b0 43.4px,#e6d6c2 43.4px,#e6d6c2 45.3px,#c9c0b4 45.3px,#c9c0b4 47.2px,#8a8a8a 47.2px,#8a8a8a 48.6px,#d8c8b8 48.6px,#d8c8b8 50.2px,#b8c8dc 50.2px,#b8c8dc 51.9px)"></div><div style="left:305px;top:203.65px;width:51px;height:2.8px;opacity:0.85;background:linear-gradient(90deg,#b0b0b0 0.0px,#b0b0b0 1.3px,#8a8a8a 1.3px,#8a8a8a 2.9px,#eeeeee 2.9px,#eeeeee 4.5px,#eeeeee 4.5px,#eeeeee 6.2px,#a8a8a8 6.2px,#a8a8a8 7.7px,#d8c8b8 7.7px,#d8c8b8 9.1px,#dfe6ee 9.1px,#dfe6ee 10.6px,#e6d6c2 10.6px,#e6d6c2 12.6px,transparent 12.6px,transparent 14.0px,transparent 14.0px,transparent 15.1px,transparent 15.1px,transparent 17.0px,transparent 17.0px,transparent 18.5px,#c6d8ec 18.5px,#c6d8ec 19.9px,#8a8a8a 19.9px,#8a8a8a 21.0px,#c6d8ec 21.0px,#c6d8ec 22.9px,#a8a8a8 22.9px,#a8a8a8 24.2px,#a8a8a8 24.2px,#a8a8a8 25.3px,#d4b8a0 25.3px,#d4b8a0 26.8px,#dfe6ee 26.8px,#dfe6ee 28.6px,#d8c8b8 28.6px,#d8c8b8 30.0px,#d4b8a0 30.0px,#d4b8a0 31.8px,#8a8a8a 31.8px,#8a8a8a 32.9px,#c6d8ec 32.9px,#c6d8ec 34.7px,#b0b0b0 34.7px,#b0b0b0 36.6px,#eeeeee 36.6px,#eeeeee 38.6px,#c9c0b4 38.6px,#c9c0b4 39.9px,transparent 39.9px,transparent 41.1px,transparent 41.1px,transparent 42.3px,#a8a8a8 42.3px,#a8a8a8 44.1px,#9ca8b6 44.1px,#9ca8b6 45.8px,#c6d8ec 45.8px,#c6d8ec 46.9px,#e6d6c2 46.9px,#e6d6c2 48.9px,#c9c0b4 48.9px,#c9c0b4 50.2px,#b8c8dc 50.2px,#b8c8dc 51.3px)"></div><div style="left:316px;top:203.25px;width:7px;height:0.9px;background:#b4b4b4"></div>
<div style="left:237.1px;top:212.04999999999998px;width:8.4px;height:8.4px;box-sizing:border-box;border:1px solid #86a3c6;border-radius:1.2px;background:#efefec"></div>
<div style="left:475.4px;top:209.80px;width:9.6px;height:11.80px;box-sizing:border-box;background:#f2f2f2;border-right:1px solid #3c3c3c;border-bottom:1px solid #3c3c3c;border-top:0.6px solid #fff;border-left:0.6px solid #e2e2e2"></div>
<svg style="left:477.4px;top:214.45px" width="6" height="4" viewBox="0 0 6 4"><path d="M0.8 0.6 h4.4 l-2.2 2.7 z" fill="#111"/></svg>
<div style="left:305px;top:213.25px;width:51px;height:3.0px;opacity:0.85;background:linear-gradient(90deg,#a8a8a8 0.0px,#a8a8a8 1.2px,#8a8a8a 1.2px,#8a8a8a 3.1px,#dfe6ee 3.1px,#dfe6ee 4.5px,#8a8a8a 4.5px,#8a8a8a 5.6px,#dfe6ee 5.6px,#dfe6ee 6.9px,#b8c8dc 6.9px,#b8c8dc 8.1px,#9ca8b6 8.1px,#9ca8b6 9.3px,#a8a8a8 9.3px,#a8a8a8 11.0px,#8a8a8a 11.0px,#8a8a8a 12.8px,transparent 12.8px,transparent 14.5px,transparent 14.5px,transparent 15.6px,transparent 15.6px,transparent 16.8px,transparent 16.8px,transparent 18.2px,#e6d6c2 18.2px,#e6d6c2 19.5px,#b8c8dc 19.5px,#b8c8dc 21.4px,#8a8a8a 21.4px,#8a8a8a 22.6px,#eeeeee 22.6px,#eeeeee 24.6px,#c9c0b4 24.6px,#c9c0b4 26.3px,#d4b8a0 26.3px,#d4b8a0 27.9px,#c6d8ec 27.9px,#c6d8ec 29.1px,#9ca8b6 29.1px,#9ca8b6 30.4px,#9ca8b6 30.4px,#9ca8b6 32.4px,#a8a8a8 32.4px,#a8a8a8 34.2px,#c6d8ec 34.2px,#c6d8ec 35.4px,#e6d6c2 35.4px,#e6d6c2 36.8px,#9ca8b6 36.8px,#9ca8b6 38.5px,#a8a8a8 38.5px,#a8a8a8 40.0px,transparent 40.0px,transparent 41.2px,transparent 41.2px,transparent 42.6px,#b8c8dc 42.6px,#b8c8dc 44.4px,#a8a8a8 44.4px,#a8a8a8 46.2px,#9ca8b6 46.2px,#9ca8b6 47.6px,#b8c8dc 47.6px,#b8c8dc 49.4px,#b0b0b0 49.4px,#b0b0b0 51.4px)"></div><div style="left:305px;top:216.15px;width:51px;height:2.8px;opacity:0.85;background:linear-gradient(90deg,#9ca8b6 0.0px,#9ca8b6 1.1px,#e6d6c2 1.1px,#e6d6c2 2.9px,#9ca8b6 2.9px,#9ca8b6 4.3px,#8a8a8a 4.3px,#8a8a8a 5.9px,#c9c0b4 5.9px,#c9c0b4 7.3px,#b0b0b0 7.3px,#b0b0b0 8.9px,#9ca8b6 8.9px,#9ca8b6 10.6px,#9ca8b6 10.6px,#9ca8b6 12.5px,transparent 12.5px,transparent 13.7px,transparent 13.7px,transparent 15.5px,transparent 15.5px,transparent 17.3px,transparent 17.3px,transparent 18.4px,#b0b0b0 18.4px,#b0b0b0 19.5px,#d8c8b8 19.5px,#d8c8b8 21.1px,#b0b0b0 21.1px,#b0b0b0 22.9px,#c6d8ec 22.9px,#c6d8ec 24.7px,#c6d8ec 24.7px,#c6d8ec 26.2px,#d4b8a0 26.2px,#d4b8a0 27.8px,#c9c0b4 27.8px,#c9c0b4 29.6px,#c9c0b4 29.6px,#c9c0b4 31.4px,#b8c8dc 31.4px,#b8c8dc 32.7px,#8a8a8a 32.7px,#8a8a8a 34.5px,#c6d8ec 34.5px,#c6d8ec 36.3px,#dfe6ee 36.3px,#dfe6ee 37.6px,#eeeeee 37.6px,#eeeeee 39.1px,#d4b8a0 39.1px,#d4b8a0 40.8px,transparent 40.8px,transparent 42.2px,#a8a8a8 42.2px,#a8a8a8 43.5px,#b0b0b0 43.5px,#b0b0b0 44.7px,#d8c8b8 44.7px,#d8c8b8 46.2px,#b0b0b0 46.2px,#b0b0b0 47.5px,#c6d8ec 47.5px,#c6d8ec 49.1px,#c6d8ec 49.1px,#c6d8ec 50.9px,transparent 50.9px,transparent 52.5px)"></div><div style="left:316px;top:215.75px;width:7px;height:0.9px;background:#b4b4b4"></div>
<div style="left:247.60px;top:222.20px;width:569.80px;height:12.50px;background:#f5f5f5;"></div>
<div style="left:237.1px;top:224.54999999999998px;width:8.4px;height:8.4px;box-sizing:border-box;border:1px solid #86a3c6;border-radius:1.2px;background:#efefec"></div>
<div style="left:475.4px;top:222.30px;width:9.6px;height:11.80px;box-sizing:border-box;background:#f2f2f2;border-right:1px solid #3c3c3c;border-bottom:1px solid #3c3c3c;border-top:0.6px solid #fff;border-left:0.6px solid #e2e2e2"></div>
<svg style="left:477.4px;top:226.95px" width="6" height="4" viewBox="0 0 6 4"><path d="M0.8 0.6 h4.4 l-2.2 2.7 z" fill="#111"/></svg>
<div style="left:305px;top:225.75px;width:51px;height:3.0px;opacity:0.85;background:linear-gradient(90deg,#dfe6ee 0.0px,#dfe6ee 1.4px,#b0b0b0 1.4px,#b0b0b0 2.9px,#c9c0b4 2.9px,#c9c0b4 4.4px,#a8a8a8 4.4px,#a8a8a8 5.6px,#eeeeee 5.6px,#eeeeee 7.1px,#e6d6c2 7.1px,#e6d6c2 8.6px,#e6d6c2 8.6px,#e6d6c2 10.0px,#dfe6ee 10.0px,#dfe6ee 11.4px,#dfe6ee 11.4px,#dfe6ee 12.9px,transparent 12.9px,transparent 14.9px,transparent 14.9px,transparent 16.2px,transparent 16.2px,transparent 17.3px,transparent 17.3px,transparent 18.7px,#b8c8dc 18.7px,#b8c8dc 20.3px,#8a8a8a 20.3px,#8a8a8a 22.2px,#9ca8b6 22.2px,#9ca8b6 23.9px,#b0b0b0 23.9px,#b0b0b0 25.8px,#eeeeee 25.8px,#eeeeee 27.1px,#d4b8a0 27.1px,#d4b8a0 29.0px,#b8c8dc 29.0px,#b8c8dc 30.9px,#eeeeee 30.9px,#eeeeee 32.1px,#c9c0b4 32.1px,#c9c0b4 33.6px,#c6d8ec 33.6px,#c6d8ec 35.1px,#c6d8ec 35.1px,#c6d8ec 36.9px,#eeeeee 36.9px,#eeeeee 38.6px,#b0b0b0 38.6px,#b0b0b0 39.8px,transparent 39.8px,transparent 41.3px,transparent 41.3px,transparent 43.1px,#b8c8dc 43.1px,#b8c8dc 45.0px,#9ca8b6 45.0px,#9ca8b6 46.6px,#eeeeee 46.6px,#eeeeee 48.5px,#c6d8ec 48.5px,#c6d8ec 49.6px,#a8a8a8 49.6px,#a8a8a8 51.5px)"></div><div style="left:305px;top:228.65px;width:51px;height:2.8px;opacity:0.85;background:linear-gradient(90deg,#d8c8b8 0.0px,#d8c8b8 1.9px,#c6d8ec 1.9px,#c6d8ec 3.6px,#b0b0b0 3.6px,#b0b0b0 5.0px,#8a8a8a 5.0px,#8a8a8a 6.4px,#eeeeee 6.4px,#eeeeee 7.6px,#dfe6ee 7.6px,#dfe6ee 9.6px,#a8a8a8 9.6px,#a8a8a8 11.5px,#b8c8dc 11.5px,#b8c8dc 13.0px,transparent 13.0px,transparent 14.4px,transparent 14.4px,transparent 16.0px,transparent 16.0px,transparent 17.7px,transparent 17.7px,transparent 18.9px,#d4b8a0 18.9px,#d4b8a0 20.9px,#dfe6ee 20.9px,#dfe6ee 22.5px,#d8c8b8 22.5px,#d8c8b8 24.4px,#e6d6c2 24.4px,#e6d6c2 25.7px,#e6d6c2 25.7px,#e6d6c2 27.0px,#eeeeee 27.0px,#eeeeee 28.8px,#b0b0b0 28.8px,#b0b0b0 30.7px,#d8c8b8 30.7px,#d8c8b8 32.2px,#c9c0b4 32.2px,#c9c0b4 33.9px,#d8c8b8 33.9px,#d8c8b8 35.4px,#b0b0b0 35.4px,#b0b0b0 37.0px,#eeeeee 37.0px,#eeeeee 38.2px,#dfe6ee 38.2px,#dfe6ee 39.9px,transparent 39.9px,transparent 41.3px,transparent 41.3px,transparent 43.1px,#a8a8a8 43.1px,#a8a8a8 45.1px,#a8a8a8 45.1px,#a8a8a8 46.3px,#c6d8ec 46.3px,#c6d8ec 48.1px,#a8a8a8 48.1px,#a8a8a8 49.3px,#a8a8a8 49.3px,#a8a8a8 50.7px,transparent 50.7px,transparent 52.0px)"></div><div style="left:316px;top:228.25px;width:7px;height:0.9px;background:#b4b4b4"></div>
<div style="left:237.1px;top:237.04999999999998px;width:8.4px;height:8.4px;box-sizing:border-box;border:1px solid #86a3c6;border-radius:1.2px;background:#efefec"></div>
<div style="left:475.4px;top:234.80px;width:9.6px;height:11.80px;box-sizing:border-box;background:#f2f2f2;border-right:1px solid #3c3c3c;border-bottom:1px solid #3c3c3c;border-top:0.6px solid #fff;border-left:0.6px solid #e2e2e2"></div>
<svg style="left:477.4px;top:239.45px" width="6" height="4" viewBox="0 0 6 4"><path d="M0.8 0.6 h4.4 l-2.2 2.7 z" fill="#111"/></svg>
<div style="left:305px;top:238.25px;width:51px;height:3.0px;opacity:0.85;background:linear-gradient(90deg,#dfe6ee 0.0px,#dfe6ee 1.3px,#a8a8a8 1.3px,#a8a8a8 3.3px,#dfe6ee 3.3px,#dfe6ee 4.7px,#e6d6c2 4.7px,#e6d6c2 6.1px,#a8a8a8 6.1px,#a8a8a8 7.7px,#c9c0b4 7.7px,#c9c0b4 9.7px,#eeeeee 9.7px,#eeeeee 10.8px,#dfe6ee 10.8px,#dfe6ee 12.1px,transparent 12.1px,transparent 13.7px,transparent 13.7px,transparent 14.9px,transparent 14.9px,transparent 16.6px,transparent 16.6px,transparent 18.5px,#9ca8b6 18.5px,#9ca8b6 19.8px,#d8c8b8 19.8px,#d8c8b8 21.5px,#eeeeee 21.5px,#eeeeee 23.4px,#c6d8ec 23.4px,#c6d8ec 24.8px,#d8c8b8 24.8px,#d8c8b8 26.2px,#e6d6c2 26.2px,#e6d6c2 27.3px,#d4b8a0 27.3px,#d4b8a0 28.5px,#9ca8b6 28.5px,#9ca8b6 29.9px,#e6d6c2 29.9px,#e6d6c2 31.5px,#b8c8dc 31.5px,#b8c8dc 32.9px,#d8c8b8 32.9px,#d8c8b8 34.1px,#9ca8b6 34.1px,#9ca8b6 35.7px,#e6d6c2 35.7px,#e6d6c2 37.2px,#d4b8a0 37.2px,#d4b8a0 38.7px,#8a8a8a 38.7px,#8a8a8a 40.1px,transparent 40.1px,transparent 41.9px,#d8c8b8 41.9px,#d8c8b8 43.3px,#e6d6c2 43.3px,#e6d6c2 44.4px,#c6d8ec 44.4px,#c6d8ec 45.9px,#e6d6c2 45.9px,#e6d6c2 47.6px,#c9c0b4 47.6px,#c9c0b4 48.8px,#8a8a8a 48.8px,#8a8a8a 50.2px,#dfe6ee 50.2px,#dfe6ee 51.9px)"></div><div style="left:305px;top:241.15px;width:51px;height:2.8px;opacity:0.85;background:linear-gradient(90deg,#9ca8b6 0.0px,#9ca8b6 2.0px,#b0b0b0 2.0px,#b0b0b0 3.8px,#a8a8a8 3.8px,#a8a8a8 5.6px,#eeeeee 5.6px,#eeeeee 6.9px,#d8c8b8 6.9px,#d8c8b8 8.4px,#c6d8ec 8.4px,#c6d8ec 9.6px,#b0b0b0 9.6px,#b0b0b0 10.7px,#d4b8a0 10.7px,#d4b8a0 12.7px,transparent 12.7px,transparent 14.3px,transparent 14.3px,transparent 15.7px,transparent 15.7px,transparent 17.5px,transparent 17.5px,transparent 19.3px,#8a8a8a 19.3px,#8a8a8a 20.9px,#b0b0b0 20.9px,#b0b0b0 22.2px,#9ca8b6 22.2px,#9ca8b6 23.8px,#a8a8a8 23.8px,#a8a8a8 25.6px,#c6d8ec 25.6px,#c6d8ec 27.2px,#d4b8a0 27.2px,#d4b8a0 28.8px,#a8a8a8 28.8px,#a8a8a8 30.2px,#b8c8dc 30.2px,#b8c8dc 31.3px,#c6d8ec 31.3px,#c6d8ec 33.3px,#dfe6ee 33.3px,#dfe6ee 34.7px,#9ca8b6 34.7px,#9ca8b6 36.1px,#9ca8b6 36.1px,#9ca8b6 37.7px,#b0b0b0 37.7px,#b0b0b0 39.6px,transparent 39.6px,transparent 41.6px,#b0b0b0 41.6px,#b0b0b0 42.9px,#b0b0b0 42.9px,#b0b0b0 44.1px,#c6d8ec 44.1px,#c6d8ec 45.8px,#d4b8a0 45.8px,#d4b8a0 47.6px,#e6d6c2 47.6px,#e6d6c2 49.5px,#b8c8dc 49.5px,#b8c8dc 51.3px)"></div><div style="left:316px;top:240.75px;width:7px;height:0.9px;background:#b4b4b4"></div>
<div style="left:247.60px;top:247.20px;width:569.80px;height:12.50px;background:#f5f5f5;"></div>
<div style="left:237.1px;top:249.54999999999998px;width:8.4px;height:8.4px;box-sizing:border-box;border:1px solid #86a3c6;border-radius:1.2px;background:#efefec"></div>
<div style="left:475.4px;top:247.30px;width:9.6px;height:11.80px;box-sizing:border-box;background:#f2f2f2;border-right:1px solid #3c3c3c;border-bottom:1px solid #3c3c3c;border-top:0.6px solid #fff;border-left:0.6px solid #e2e2e2"></div>
<svg style="left:477.4px;top:251.95px" width="6" height="4" viewBox="0 0 6 4"><path d="M0.8 0.6 h4.4 l-2.2 2.7 z" fill="#111"/></svg>
<div style="left:305px;top:250.75px;width:51px;height:3.0px;opacity:0.85;background:linear-gradient(90deg,#eeeeee 0.0px,#eeeeee 1.2px,#dfe6ee 1.2px,#dfe6ee 3.1px,#9ca8b6 3.1px,#9ca8b6 4.3px,#b8c8dc 4.3px,#b8c8dc 6.0px,#b8c8dc 6.0px,#b8c8dc 7.4px,#9ca8b6 7.4px,#9ca8b6 9.3px,#a8a8a8 9.3px,#a8a8a8 10.4px,#8a8a8a 10.4px,#8a8a8a 12.2px,transparent 12.2px,transparent 13.8px,transparent 13.8px,transparent 15.7px,transparent 15.7px,transparent 16.8px,transparent 16.8px,transparent 18.5px,#b0b0b0 18.5px,#b0b0b0 19.9px,#c6d8ec 19.9px,#c6d8ec 21.6px,#b8c8dc 21.6px,#b8c8dc 23.0px,#c9c0b4 23.0px,#c9c0b4 24.3px,#a8a8a8 24.3px,#a8a8a8 26.1px,#d8c8b8 26.1px,#d8c8b8 27.5px,#d8c8b8 27.5px,#d8c8b8 29.2px,#eeeeee 29.2px,#eeeeee 31.2px,#eeeeee 31.2px,#eeeeee 32.9px,#d8c8b8 32.9px,#d8c8b8 34.7px,#c9c0b4 34.7px,#c9c0b4 36.3px,#e6d6c2 36.3px,#e6d6c2 37.9px,#c6d8ec 37.9px,#c6d8ec 39.8px,transparent 39.8px,transparent 41.2px,transparent 41.2px,transparent 43.2px,#e6d6c2 43.2px,#e6d6c2 44.6px,#d4b8a0 44.6px,#d4b8a0 46.2px,#e6d6c2 46.2px,#e6d6c2 47.8px,#dfe6ee 47.8px,#dfe6ee 48.9px,#b8c8dc 48.9px,#b8c8dc 50.8px,transparent 50.8px,transparent 52.6px)"></div><div style="left:305px;top:253.65px;width:51px;height:2.8px;opacity:0.85;background:linear-gradient(90deg,#8a8a8a 0.0px,#8a8a8a 1.4px,#a8a8a8 1.4px,#a8a8a8 2.7px,#dfe6ee 2.7px,#dfe6ee 4.0px,#b0b0b0 4.0px,#b0b0b0 5.4px,#d4b8a0 5.4px,#d4b8a0 6.8px,#eeeeee 6.8px,#eeeeee 8.3px,#9ca8b6 8.3px,#9ca8b6 9.9px,#9ca8b6 9.9px,#9ca8b6 11.2px,#c6d8ec 11.2px,#c6d8ec 12.5px,transparent 12.5px,transparent 13.6px,transparent 13.6px,transparent 15.0px,transparent 15.0px,transparent 16.7px,transparent 16.7px,transparent 18.0px,#a8a8a8 18.0px,#a8a8a8 19.6px,#b0b0b0 19.6px,#b0b0b0 21.4px,#eeeeee 21.4px,#eeeeee 22.9px,#c9c0b4 22.9px,#c9c0b4 24.8px,#e6d6c2 24.8px,#e6d6c2 26.2px,#d8c8b8 26.2px,#d8c8b8 27.9px,#9ca8b6 27.9px,#9ca8b6 29.2px,#c9c0b4 29.2px,#c9c0b4 30.4px,#b0b0b0 30.4px,#b0b0b0 32.1px,#e6d6c2 32.1px,#e6d6c2 33.7px,#eeeeee 33.7px,#eeeeee 34.8px,#d4b8a0 34.8px,#d4b8a0 36.2px,#9ca8b6 36.2px,#9ca8b6 37.5px,#9ca8b6 37.5px,#9ca8b6 39.1px,#e6d6c2 39.1px,#e6d6c2 40.6px,transparent 40.6px,transparent 41.9px,#9ca8b6 41.9px,#9ca8b6 43.7px,#a8a8a8 43.7px,#a8a8a8 45.4px,#a8a8a8 45.4px,#a8a8a8 46.7px,#9ca8b6 46.7px,#9ca8b6 48.4px,#8a8a8a 48.4px,#8a8a8a 50.0px,#b0b0b0 50.0px,#b0b0b0 51.3px)"></div><div style="left:316px;top:253.25px;width:7px;height:0.9px;background:#b4b4b4"></div>
<div style="left:237.1px;top:262.05px;width:8.4px;height:8.4px;box-sizing:border-box;border:1px solid #86a3c6;border-radius:1.2px;background:#efefec"></div>
<div style="left:475.4px;top:259.80px;width:9.6px;height:11.80px;box-sizing:border-box;background:#f2f2f2;border-right:1px solid #3c3c3c;border-bottom:1px solid #3c3c3c;border-top:0.6px solid #fff;border-left:0.6px solid #e2e2e2"></div>
<svg style="left:477.4px;top:264.45px" width="6" height="4" viewBox="0 0 6 4"><path d="M0.8 0.6 h4.4 l-2.2 2.7 z" fill="#111"/></svg>
<div style="left:305px;top:263.25px;width:51px;height:3.0px;opacity:0.85;background:linear-gradient(90deg,#c6d8ec 0.0px,#c6d8ec 1.6px,#d4b8a0 1.6px,#d4b8a0 3.4px,#e6d6c2 3.4px,#e6d6c2 4.9px,#9ca8b6 4.9px,#9ca8b6 6.6px,#a8a8a8 6.6px,#a8a8a8 8.6px,#d4b8a0 8.6px,#d4b8a0 10.2px,#e6d6c2 10.2px,#e6d6c2 12.2px,transparent 12.2px,transparent 13.7px,transparent 13.7px,transparent 15.5px,transparent 15.5px,transparent 16.9px,transparent 16.9px,transparent 18.8px,#eeeeee 18.8px,#eeeeee 20.2px,#e6d6c2 20.2px,#e6d6c2 21.9px,#d8c8b8 21.9px,#d8c8b8 23.4px,#d4b8a0 23.4px,#d4b8a0 25.2px,#d8c8b8 25.2px,#d8c8b8 26.5px,#8a8a8a 26.5px,#8a8a8a 28.4px,#d4b8a0 28.4px,#d4b8a0 30.2px,#9ca8b6 30.2px,#9ca8b6 32.0px,#d8c8b8 32.0px,#d8c8b8 33.5px,#dfe6ee 33.5px,#dfe6ee 34.9px,#e6d6c2 34.9px,#e6d6c2 36.9px,#eeeeee 36.9px,#eeeeee 38.2px,#8a8a8a 38.2px,#8a8a8a 39.4px,#d4b8a0 39.4px,#d4b8a0 40.8px,transparent 40.8px,transparent 42.0px,#b0b0b0 42.0px,#b0b0b0 44.0px,#b8c8dc 44.0px,#b8c8dc 45.7px,#eeeeee 45.7px,#eeeeee 47.2px,#e6d6c2 47.2px,#e6d6c2 49.1px,#eeeeee 49.1px,#eeeeee 50.8px,transparent 50.8px,transparent 52.4px)"></div><div style="left:305px;top:266.15px;width:51px;height:2.8px;opacity:0.85;background:linear-gradient(90deg,#c6d8ec 0.0px,#c6d8ec 1.8px,#d8c8b8 1.8px,#d8c8b8 3.4px,#c9c0b4 3.4px,#c9c0b4 5.2px,#b0b0b0 5.2px,#b0b0b0 6.5px,#d8c8b8 6.5px,#d8c8b8 8.2px,#eeeeee 8.2px,#eeeeee 9.9px,#e6d6c2 9.9px,#e6d6c2 11.7px,transparent 11.7px,transparent 13.2px,transparent 13.2px,transparent 14.8px,transparent 14.8px,transparent 16.8px,transparent 16.8px,transparent 18.6px,#b0b0b0 18.6px,#b0b0b0 20.3px,#8a8a8a 20.3px,#8a8a8a 22.0px,#d8c8b8 22.0px,#d8c8b8 23.8px,#d8c8b8 23.8px,#d8c8b8 25.0px,#9ca8b6 25.0px,#9ca8b6 26.5px,#a8a8a8 26.5px,#a8a8a8 27.9px,#d8c8b8 27.9px,#d8c8b8 29.2px,#b0b0b0 29.2px,#b0b0b0 31.1px,#9ca8b6 31.1px,#9ca8b6 32.8px,#a8a8a8 32.8px,#a8a8a8 34.7px,#8a8a8a 34.7px,#8a8a8a 36.6px,#dfe6ee 36.6px,#dfe6ee 38.5px,#9ca8b6 38.5px,#9ca8b6 40.3px,transparent 40.3px,transparent 41.6px,#9ca8b6 41.6px,#9ca8b6 42.8px,#c9c0b4 42.8px,#c9c0b4 44.2px,#dfe6ee 44.2px,#dfe6ee 45.9px,#b0b0b0 45.9px,#b0b0b0 47.1px,#d8c8b8 47.1px,#d8c8b8 48.4px,#b0b0b0 48.4px,#b0b0b0 50.2px,#8a8a8a 50.2px,#8a8a8a 51.4px)"></div><div style="left:316px;top:265.75px;width:7px;height:0.9px;background:#b4b4b4"></div>
<div style="left:247.60px;top:272.20px;width:569.80px;height:12.50px;background:#f5f5f5;"></div>
<div style="left:237.1px;top:274.55px;width:8.4px;height:8.4px;box-sizing:border-box;border:1px solid #86a3c6;border-radius:1.2px;background:#efefec"></div>
<div style="left:475.4px;top:272.30px;width:9.6px;height:11.80px;box-sizing:border-box;background:#f2f2f2;border-right:1px solid #3c3c3c;border-bottom:1px solid #3c3c3c;border-top:0.6px solid #fff;border-left:0.6px solid #e2e2e2"></div>
<svg style="left:477.4px;top:276.95px" width="6" height="4" viewBox="0 0 6 4"><path d="M0.8 0.6 h4.4 l-2.2 2.7 z" fill="#111"/></svg>
<div style="left:305px;top:275.75px;width:51px;height:3.0px;opacity:0.85;background:linear-gradient(90deg,#eeeeee 0.0px,#eeeeee 1.6px,#dfe6ee 1.6px,#dfe6ee 3.5px,#8a8a8a 3.5px,#8a8a8a 5.5px,#dfe6ee 5.5px,#dfe6ee 6.6px,#eeeeee 6.6px,#eeeeee 7.9px,#8a8a8a 7.9px,#8a8a8a 9.8px,#eeeeee 9.8px,#eeeeee 11.6px,transparent 11.6px,transparent 13.0px,transparent 13.0px,transparent 14.4px,transparent 14.4px,transparent 15.8px,transparent 15.8px,transparent 17.0px,transparent 17.0px,transparent 18.5px,#eeeeee 18.5px,#eeeeee 20.1px,#9ca8b6 20.1px,#9ca8b6 21.6px,#a8a8a8 21.6px,#a8a8a8 22.9px,#c6d8ec 22.9px,#c6d8ec 24.4px,#d4b8a0 24.4px,#d4b8a0 25.9px,#d8c8b8 25.9px,#d8c8b8 27.2px,#d8c8b8 27.2px,#d8c8b8 29.0px,#d4b8a0 29.0px,#d4b8a0 30.4px,#a8a8a8 30.4px,#a8a8a8 31.9px,#c6d8ec 31.9px,#c6d8ec 33.2px,#d8c8b8 33.2px,#d8c8b8 34.7px,#8a8a8a 34.7px,#8a8a8a 36.1px,#c6d8ec 36.1px,#c6d8ec 37.4px,#e6d6c2 37.4px,#e6d6c2 38.8px,#9ca8b6 38.8px,#9ca8b6 40.3px,transparent 40.3px,transparent 41.4px,transparent 41.4px,transparent 43.0px,#e6d6c2 43.0px,#e6d6c2 44.2px,#d4b8a0 44.2px,#d4b8a0 45.7px,#b0b0b0 45.7px,#b0b0b0 46.9px,#b8c8dc 46.9px,#b8c8dc 48.3px,#d8c8b8 48.3px,#d8c8b8 50.2px,#b0b0b0 50.2px,#b0b0b0 51.8px)"></div><div style="left:305px;top:278.65px;width:51px;height:2.8px;opacity:0.85;background:linear-gradient(90deg,#dfe6ee 0.0px,#dfe6ee 1.5px,#b0b0b0 1.5px,#b0b0b0 2.9px,#d8c8b8 2.9px,#d8c8b8 4.7px,#c6d8ec 4.7px,#c6d8ec 6.5px,#c9c0b4 6.5px,#c9c0b4 7.7px,#b8c8dc 7.7px,#b8c8dc 9.1px,#c6d8ec 9.1px,#c6d8ec 11.0px,#c9c0b4 11.0px,#c9c0b4 12.7px,transparent 12.7px,transparent 14.5px,transparent 14.5px,transparent 16.3px,transparent 16.3px,transparent 18.1px,#b0b0b0 18.1px,#b0b0b0 19.4px,#eeeeee 19.4px,#eeeeee 21.3px,#dfe6ee 21.3px,#dfe6ee 23.1px,#b0b0b0 23.1px,#b0b0b0 24.6px,#b0b0b0 24.6px,#b0b0b0 25.7px,#9ca8b6 25.7px,#9ca8b6 27.6px,#e6d6c2 27.6px,#e6d6c2 29.1px,#b8c8dc 29.1px,#b8c8dc 30.7px,#8a8a8a 30.7px,#8a8a8a 32.7px,#d4b8a0 32.7px,#d4b8a0 33.8px,#9ca8b6 33.8px,#9ca8b6 35.5px,#b0b0b0 35.5px,#b0b0b0 36.7px,#eeeeee 36.7px,#eeeeee 38.0px,#dfe6ee 38.0px,#dfe6ee 39.5px,transparent 39.5px,transparent 41.5px,#9ca8b6 41.5px,#9ca8b6 43.4px,#d4b8a0 43.4px,#d4b8a0 44.7px,#b0b0b0 44.7px,#b0b0b0 46.4px,#d8c8b8 46.4px,#d8c8b8 47.5px,#c9c0b4 47.5px,#c9c0b4 49.0px,#c9c0b4 49.0px,#c9c0b4 50.5px,#9ca8b6 50.5px,#9ca8b6 51.6px)"></div><div style="left:316px;top:278.25px;width:7px;height:0.9px;background:#b4b4b4"></div>
<div style="left:237.1px;top:287.05px;width:8.4px;height:8.4px;box-sizing:border-box;border:1px solid #86a3c6;border-radius:1.2px;background:#efefec"></div>
<div style="left:475.4px;top:284.80px;width:9.6px;height:11.80px;box-sizing:border-box;background:#f2f2f2;border-right:1px solid #3c3c3c;border-bottom:1px solid #3c3c3c;border-top:0.6px solid #fff;border-left:0.6px solid #e2e2e2"></div>
<svg style="left:477.4px;top:289.45px" width="6" height="4" viewBox="0 0 6 4"><path d="M0.8 0.6 h4.4 l-2.2 2.7 z" fill="#111"/></svg>
<div style="left:305px;top:288.25px;width:51px;height:3.0px;opacity:0.85;background:linear-gradient(90deg,#c6d8ec 0.0px,#c6d8ec 1.2px,#a8a8a8 1.2px,#a8a8a8 3.1px,#a8a8a8 3.1px,#a8a8a8 4.9px,#c6d8ec 4.9px,#c6d8ec 6.1px,#b0b0b0 6.1px,#b0b0b0 7.5px,#9ca8b6 7.5px,#9ca8b6 8.8px,#eeeeee 8.8px,#eeeeee 10.1px,#dfe6ee 10.1px,#dfe6ee 11.2px,#c6d8ec 11.2px,#c6d8ec 13.2px,transparent 13.2px,transparent 14.7px,transparent 14.7px,transparent 16.4px,transparent 16.4px,transparent 18.3px,#b8c8dc 18.3px,#b8c8dc 19.6px,#e6d6c2 19.6px,#e6d6c2 21.3px,#c9c0b4 21.3px,#c9c0b4 23.0px,#8a8a8a 23.0px,#8a8a8a 24.9px,#b8c8dc 24.9px,#b8c8dc 26.0px,#d8c8b8 26.0px,#d8c8b8 27.4px,#eeeeee 27.4px,#eeeeee 29.3px,#8a8a8a 29.3px,#8a8a8a 30.9px,#e6d6c2 30.9px,#e6d6c2 32.2px,#8a8a8a 32.2px,#8a8a8a 34.2px,#c9c0b4 34.2px,#c9c0b4 36.1px,#a8a8a8 36.1px,#a8a8a8 37.3px,#9ca8b6 37.3px,#9ca8b6 38.6px,#8a8a8a 38.6px,#8a8a8a 39.9px,transparent 39.9px,transparent 41.6px,#b0b0b0 41.6px,#b0b0b0 42.7px,#9ca8b6 42.7px,#9ca8b6 44.0px,#e6d6c2 44.0px,#e6d6c2 45.6px,#c9c0b4 45.6px,#c9c0b4 46.9px,#8a8a8a 46.9px,#8a8a8a 48.8px,#dfe6ee 48.8px,#dfe6ee 50.0px,#e6d6c2 50.0px,#e6d6c2 51.7px)"></div><div style="left:305px;top:291.15px;width:51px;height:2.8px;opacity:0.85;background:linear-gradient(90deg,#c9c0b4 0.0px,#c9c0b4 1.8px,#c9c0b4 1.8px,#c9c0b4 3.0px,#d4b8a0 3.0px,#d4b8a0 4.2px,#d8c8b8 4.2px,#d8c8b8 5.4px,#a8a8a8 5.4px,#a8a8a8 6.8px,#8a8a8a 6.8px,#8a8a8a 8.5px,#9ca8b6 8.5px,#9ca8b6 10.3px,#b8c8dc 10.3px,#b8c8dc 12.1px,transparent 12.1px,transparent 13.7px,transparent 13.7px,transparent 14.8px,transparent 14.8px,transparent 16.4px,transparent 16.4px,transparent 17.5px,transparent 17.5px,transparent 19.0px,#eeeeee 19.0px,#eeeeee 20.3px,#d8c8b8 20.3px,#d8c8b8 21.9px,#a8a8a8 21.9px,#a8a8a8 23.5px,#9ca8b6 23.5px,#9ca8b6 24.8px,#b8c8dc 24.8px,#b8c8dc 26.0px,#a8a8a8 26.0px,#a8a8a8 27.9px,#c6d8ec 27.9px,#c6d8ec 29.1px,#b0b0b0 29.1px,#b0b0b0 30.7px,#dfe6ee 30.7px,#dfe6ee 32.7px,#dfe6ee 32.7px,#dfe6ee 33.9px,#dfe6ee 33.9px,#dfe6ee 35.5px,#c6d8ec 35.5px,#c6d8ec 37.4px,#8a8a8a 37.4px,#8a8a8a 39.2px,#a8a8a8 39.2px,#a8a8a8 40.7px,transparent 40.7px,transparent 42.4px,#c9c0b4 42.4px,#c9c0b4 44.3px,#dfe6ee 44.3px,#dfe6ee 46.0px,#e6d6c2 46.0px,#e6d6c2 47.7px,#8a8a8a 47.7px,#8a8a8a 49.7px,#a8a8a8 49.7px,#a8a8a8 50.9px,transparent 50.9px,transparent 52.6px)"></div><div style="left:316px;top:290.75px;width:7px;height:0.9px;background:#b4b4b4"></div>
<div style="left:303.00px;top:87.70px;width:0.80px;height:209.50px;background:#ececec;"></div>
<div style="left:377.80px;top:87.70px;width:0.80px;height:209.50px;background:#ececec;"></div>
<div style="left:427.20px;top:87.70px;width:0.80px;height:209.50px;background:#ececec;"></div>
<div style="left:485.40px;top:87.70px;width:0.80px;height:209.50px;background:#ececec;"></div>
<div style="left:524.60px;top:87.70px;width:0.80px;height:209.50px;background:#ececec;"></div>
<div style="left:587.00px;top:87.70px;width:0.80px;height:209.50px;background:#ececec;"></div>
<div style="left:624.70px;top:87.70px;width:0.80px;height:209.50px;background:#ececec;"></div>
<div style="left:714.40px;top:87.70px;width:0.80px;height:209.50px;background:#ececec;"></div>
<div style="left:236px;top:88px;width:11.9px;height:12.8px;box-sizing:border-box;border:1.5px solid #111"></div>
<svg style="left:710px;top:72px" width="116" height="230" viewBox="710 72 116 230"><rect x="714.7" y="76.1" width="106.2" height="222.1" rx="0.6" fill="none" stroke="#06fb06" stroke-width="2.4"/></svg>
<span class="t" style="left:11.80px;top:40.00px;font-size:7.1px;color:#ffffff;-webkit-text-stroke:0.2px #ffffff;transform:scaleX(0.9980)">Iniciar</span>
<span class="t" style="left:40.90px;top:40.00px;font-size:7.1px;color:#ffffff;-webkit-text-stroke:0.2px #ffffff;transform:scaleX(0.9123)">Cancelar</span>
<span class="t" style="left:74.90px;top:40.00px;font-size:7.1px;color:#ffffff;-webkit-text-stroke:0.2px #ffffff;transform:scaleX(0.8950)">Aprobar</span>
<span class="t" style="left:105.80px;top:40.00px;font-size:7.1px;color:#ffffff;-webkit-text-stroke:0.2px #ffffff;transform:scaleX(0.9119)">Rechazar</span>
<span class="t" style="left:140.10px;top:40.00px;font-size:7.1px;color:#6fa6d6;-webkit-text-stroke:0.2px #6fa6d6;transform:scaleX(0.9208)">Recuperar</span>
<span class="t" style="left:177.00px;top:40.00px;font-size:7.1px;color:#6fa6d6;-webkit-text-stroke:0.2px #6fa6d6;transform:scaleX(0.9635)">Contabilizar</span>
<span class="t" style="left:219.80px;top:40.00px;font-size:7.1px;color:#ffffff;-webkit-text-stroke:0.2px #ffffff;transform:scaleX(0.9622)">Exportar</span>
<span class="t" style="left:259.80px;top:40.00px;font-size:7.1px;color:#ffffff;-webkit-text-stroke:0.2px #ffffff;transform:scaleX(0.9717)">Imprimir</span>
<span class="t" style="left:292.20px;top:40.00px;font-size:7.1px;color:#6fa6d6;-webkit-text-stroke:0.2px #6fa6d6;transform:scaleX(0.8773)">Grupo</span>
<span class="t" style="left:332.00px;top:40.00px;font-size:7.1px;color:#ffffff;-webkit-text-stroke:0.2px #ffffff;transform:scaleX(0.8800)">Ayuda</span>
<span class="t" style="left:25.20px;top:4.00px;font-size:8.6px;color:#3a3026;font-weight:bold;transform:scaleX(0.7875)">Validación de Comprobantes Reci...</span>
<span class="t" style="left:15.20px;top:52.00px;font-size:7.6px;color:#142a4a;font-weight:bold;transform:scaleX(0.8054)">Filtros</span>
<span class="t" style="left:27.90px;top:74.00px;font-size:6.6px;color:#fff;transform:scaleX(0.9843)">Principal</span>
<span class="t" style="left:27.90px;top:138.00px;font-size:6.6px;color:#fff;transform:scaleX(0.9618)">Fechas</span>
<span class="t" style="left:27.90px;top:216.00px;font-size:6.6px;color:#fff;transform:scaleX(0.9758)">Proveedor</span>
<span class="t" style="left:27.90px;top:265.00px;font-size:6.6px;color:#fff;transform:scaleX(0.9394)">Moneda</span>
<span class="t" style="left:27.90px;top:315.00px;font-size:6.6px;color:#fff;transform:scaleX(1.0111)">Visualización</span>
<span class="t" style="left:86.80px;top:93.00px;font-size:6.9px;color:#3a3a3a;transform:scaleX(0.8128)">PENDIENTES</span>
<span class="t" style="left:86.80px;top:108.00px;font-size:6.9px;color:#3a3a3a;transform:scaleX(0.8349)">MEDIOS</span>
<span class="t" style="left:86.60px;top:157.00px;font-size:6.9px;color:#3a3a3a;transform:scaleX(0.8335)">FECHA DEL COMPROBANTE</span>
<span class="t" style="left:85.90px;top:171.00px;font-size:6.9px;color:#3a3a3a;transform:scaleX(1.0493)">01/01/2024</span>
<span class="t" style="left:85.90px;top:184.00px;font-size:6.9px;color:#3a3a3a;transform:scaleX(1.0493)">31/01/2024</span>
<span class="t" style="left:89.00px;top:235.00px;font-size:6.9px;color:#3a3a3a;transform:scaleX(0.8170)">&lt;TODOS&gt;</span>
<span class="t" style="left:89.00px;top:285.00px;font-size:6.9px;color:#3a3a3a;transform:scaleX(0.7957)">&lt;TODAS&gt;</span>
<span class="t" style="left:27.50px;top:91.00px;font-size:9px;color:#454545;transform:scaleX(0.8580)">Tipo de Reporte</span>
<span class="t" style="left:27.20px;top:105.00px;font-size:9px;color:#454545;transform:scaleX(0.8366)">Origen</span>
<span class="t" style="left:27.20px;top:155.00px;font-size:9px;color:#454545;transform:scaleX(0.9064)">Criterio</span>
<span class="t" style="left:27.00px;top:169.00px;font-size:9px;color:#454545;transform:scaleX(0.7841)">Desde</span>
<span class="t" style="left:27.00px;top:183.00px;font-size:9px;color:#454545;transform:scaleX(0.8590)">Hasta</span>
<span class="t" style="left:27.00px;top:233.00px;font-size:9px;color:#454545;transform:scaleX(0.8427)">Proveedor</span>
<span class="t" style="left:27.00px;top:283.00px;font-size:9px;color:#454545;transform:scaleX(0.7962)">Moneda</span>
<span class="t" style="left:38.50px;top:333.00px;font-size:8.6px;color:#454545;transform:scaleX(0.8990)">Ver Cliente</span>
<span class="t" style="left:38.50px;top:348.00px;font-size:8.6px;color:#454545;transform:scaleX(0.8850)">Ver Tema</span>
<span class="t" style="left:38.50px;top:362.00px;font-size:8.6px;color:#454545;transform:scaleX(0.8966)">Ver Origen Factura</span>
<span class="t" style="left:38.50px;top:377.00px;font-size:8.6px;color:#454545;transform:scaleX(0.9021)">Ver Tipo de Medio</span>
<span class="t" style="left:38.50px;top:391.00px;font-size:8.6px;color:#454545;transform:scaleX(0.9042)">Ver Diferencias</span>
<span class="t" style="left:240.70px;top:65.00px;font-size:8.6px;color:#454545;transform:scaleX(0.8905)">Comprobantes</span>
<span class="t" style="left:268.60px;top:80.00px;font-size:6.8px;color:#ffffff;font-weight:bold;transform:scaleX(0.9835)">Tipo</span>
<span class="t" style="left:305.00px;top:80.00px;font-size:6.8px;color:#ffffff;font-weight:bold;transform:scaleX(1.0273)">Nro. Comprobante</span>
<span class="t" style="left:388.00px;top:80.00px;font-size:6.8px;color:#ffffff;font-weight:bold;transform:scaleX(0.9723)">Origen</span>
<span class="t" style="left:442.20px;top:80.00px;font-size:6.8px;color:#ffffff;font-weight:bold;transform:scaleX(0.9851)">Prioridad</span>
<span class="t" style="left:495.20px;top:80.00px;font-size:6.8px;color:#ffffff;font-weight:bold;transform:scaleX(0.9406)">Comp.</span>
<span class="t" style="left:535.80px;top:80.00px;font-size:6.8px;color:#ffffff;font-weight:bold;transform:scaleX(0.9809)">Observación</span>
<span class="t" style="left:589.90px;top:80.00px;font-size:6.8px;color:#ffffff;font-weight:bold;transform:scaleX(0.9764)">Observaci</span>
<span class="t" style="left:645.80px;top:80.00px;font-size:6.8px;color:#ffffff;font-weight:bold;transform:scaleX(0.9765)">Recibido Desde</span>
<span class="t" style="left:743.00px;top:80.00px;font-size:6.8px;color:#ffffff;font-weight:bold;transform:scaleX(0.9765)">Tipo de Medios</span>
<span class="t" style="left:249.20px;top:92.00px;font-size:6.9px;color:#404040;transform:scaleX(0.8206)">FACTURA</span>
<span class="t" style="left:387.00px;top:92.00px;font-size:6.9px;color:#404040;transform:scaleX(0.8423)">MEDIOS</span>
<span class="t" style="left:429.20px;top:91.00px;font-size:6.9px;color:#404040;transform:scaleX(0.8842)">MEDIA</span>
<span class="c" style="left:487.00px;top:91.00px;font-size:6.9px;color:#404040;width:37.60px;height:7.9px"><span style="transform:scaleX(0.9418)">001 - A - FAC</span></span>
<span class="t" style="left:634.50px;top:91.00px;font-size:6.9px;color:#404040;transform:scaleX(0.9998)">Importación Automática</span>
<span class="t" style="left:718.20px;top:91.00px;font-size:6.9px;color:#404040;transform:scaleX(0.9024)">03 - T.V. POR CABLE</span>
<span class="t" style="left:249.20px;top:104.00px;font-size:6.9px;color:#404040;transform:scaleX(0.8206)">FACTURA</span>
<span class="t" style="left:387.00px;top:104.00px;font-size:6.9px;color:#404040;transform:scaleX(0.8423)">MEDIOS</span>
<span class="t" style="left:429.20px;top:103.00px;font-size:6.9px;color:#404040;transform:scaleX(0.8842)">MEDIA</span>
<span class="c" style="left:487.00px;top:104.00px;font-size:6.9px;color:#404040;width:37.60px;height:7.9px"><span style="transform:scaleX(0.9418)">001 - A - FAC</span></span>
<span class="t" style="left:634.50px;top:104.00px;font-size:6.9px;color:#404040;transform:scaleX(0.9998)">Importación Automática</span>
<span class="t" style="left:718.20px;top:104.00px;font-size:6.9px;color:#404040;transform:scaleX(0.9024)">03 - T.V. POR CABLE</span>
<span class="t" style="left:249.20px;top:117.00px;font-size:6.9px;color:#404040;transform:scaleX(0.8206)">FACTURA</span>
<span class="t" style="left:387.00px;top:117.00px;font-size:6.9px;color:#404040;transform:scaleX(0.8423)">MEDIOS</span>
<span class="t" style="left:429.20px;top:116.00px;font-size:6.9px;color:#404040;transform:scaleX(0.8842)">MEDIA</span>
<span class="c" style="left:487.00px;top:116.00px;font-size:6.9px;color:#404040;width:37.60px;height:7.9px"><span style="transform:scaleX(0.9418)">001 - A - FAC</span></span>
<span class="t" style="left:634.50px;top:116.00px;font-size:6.9px;color:#404040;transform:scaleX(0.9998)">Importación Automática</span>
<span class="t" style="left:718.20px;top:116.00px;font-size:6.9px;color:#404040;transform:scaleX(0.9024)">03 - T.V. POR CABLE</span>
<span class="t" style="left:249.20px;top:134.00px;font-size:6.9px;color:#404040;transform:scaleX(0.8206)">FACTURA</span>
<span class="t" style="left:387.00px;top:134.00px;font-size:6.9px;color:#404040;transform:scaleX(0.8423)">MEDIOS</span>
<span class="t" style="left:429.20px;top:128.00px;font-size:6.9px;color:#404040;transform:scaleX(0.8842)">MEDIA</span>
<span class="c" style="left:487.00px;top:129.00px;font-size:6.9px;color:#404040;width:37.60px;height:7.9px"><span style="transform:scaleX(0.9418)">201 - A - FAC</span></span>
<span class="t" style="left:634.50px;top:129.00px;font-size:6.9px;color:#404040;transform:scaleX(0.9998)">Importación Automática</span>
<span class="t" style="left:718.20px;top:129.00px;font-size:6.9px;color:#404040;transform:scaleX(0.9373)">02 - T.V.INTERIOR</span>
<span class="t" style="left:249.20px;top:151.00px;font-size:6.9px;color:#404040;transform:scaleX(0.8206)">FACTURA</span>
<span class="t" style="left:387.00px;top:151.00px;font-size:6.9px;color:#404040;transform:scaleX(0.8423)">MEDIOS</span>
<span class="t" style="left:429.20px;top:150.00px;font-size:6.9px;color:#404040;transform:scaleX(0.8842)">MEDIA</span>
<span class="c" style="left:487.00px;top:151.00px;font-size:6.9px;color:#404040;width:37.60px;height:7.9px"><span style="transform:scaleX(0.9418)">001 - A - FAC</span></span>
<span class="t" style="left:634.50px;top:151.00px;font-size:6.9px;color:#404040;transform:scaleX(0.9998)">Importación Automática</span>
<span class="t" style="left:718.20px;top:151.00px;font-size:6.9px;color:#404040;transform:scaleX(0.9547)">01 - T.V. GBA</span>
<span class="t" style="left:249.20px;top:164.00px;font-size:6.9px;color:#404040;transform:scaleX(0.8206)">FACTURA</span>
<span class="t" style="left:387.00px;top:164.00px;font-size:6.9px;color:#404040;transform:scaleX(0.8423)">MEDIOS</span>
<span class="t" style="left:429.20px;top:163.00px;font-size:6.9px;color:#404040;transform:scaleX(0.8842)">MEDIA</span>
<span class="c" style="left:487.00px;top:163.00px;font-size:6.9px;color:#404040;width:37.60px;height:7.9px"><span style="transform:scaleX(0.9418)">001 - A - FAC</span></span>
<span class="t" style="left:634.50px;top:163.00px;font-size:6.9px;color:#404040;transform:scaleX(0.9998)">Importación Automática</span>
<span class="t" style="left:718.20px;top:163.00px;font-size:6.9px;color:#404040;transform:scaleX(0.9547)">01 - T.V. GBA</span>
<span class="t" style="left:249.20px;top:176.00px;font-size:6.9px;color:#404040;transform:scaleX(0.8206)">FACTURA</span>
<span class="t" style="left:387.00px;top:176.00px;font-size:6.9px;color:#404040;transform:scaleX(0.8423)">MEDIOS</span>
<span class="t" style="left:429.20px;top:175.00px;font-size:6.9px;color:#404040;transform:scaleX(0.8842)">MEDIA</span>
<span class="c" style="left:487.00px;top:176.00px;font-size:6.9px;color:#404040;width:37.60px;height:7.9px"><span style="transform:scaleX(0.9418)">001 - A - FAC</span></span>
<span class="t" style="left:634.50px;top:176.00px;font-size:6.9px;color:#404040;transform:scaleX(0.9998)">Importación Automática</span>
<span class="t" style="left:718.20px;top:176.00px;font-size:6.9px;color:#404040;transform:scaleX(0.9547)">01 - T.V. GBA</span>
<span class="t" style="left:249.20px;top:189.00px;font-size:6.9px;color:#404040;transform:scaleX(0.8206)">FACTURA</span>
<span class="t" style="left:387.00px;top:189.00px;font-size:6.9px;color:#404040;transform:scaleX(0.8423)">MEDIOS</span>
<span class="t" style="left:429.20px;top:188.00px;font-size:6.9px;color:#404040;transform:scaleX(0.8842)">MEDIA</span>
<span class="c" style="left:487.00px;top:188.00px;font-size:6.9px;color:#404040;width:37.60px;height:7.9px"><span style="transform:scaleX(0.9418)">001 - A - FAC</span></span>
<span class="t" style="left:634.50px;top:188.00px;font-size:6.9px;color:#404040;transform:scaleX(0.9998)">Importación Automática</span>
<span class="t" style="left:718.20px;top:188.00px;font-size:6.9px;color:#404040;transform:scaleX(0.9547)">01 - T.V. GBA</span>
<span class="t" style="left:249.20px;top:201.00px;font-size:6.9px;color:#404040;transform:scaleX(0.8206)">FACTURA</span>
<span class="t" style="left:387.00px;top:201.00px;font-size:6.9px;color:#404040;transform:scaleX(0.8423)">MEDIOS</span>
<span class="t" style="left:429.20px;top:200.00px;font-size:6.9px;color:#404040;transform:scaleX(0.8842)">MEDIA</span>
<span class="c" style="left:487.00px;top:201.00px;font-size:6.9px;color:#404040;width:37.60px;height:7.9px"><span style="transform:scaleX(0.9418)">001 - A - FAC</span></span>
<span class="t" style="left:634.50px;top:201.00px;font-size:6.9px;color:#404040;transform:scaleX(0.9998)">Importación Automática</span>
<span class="t" style="left:718.20px;top:201.00px;font-size:6.9px;color:#404040;transform:scaleX(0.9373)">02 - T.V.INTERIOR</span>
<span class="t" style="left:249.20px;top:214.00px;font-size:6.9px;color:#404040;transform:scaleX(0.8206)">FACTURA</span>
<span class="t" style="left:387.00px;top:214.00px;font-size:6.9px;color:#404040;transform:scaleX(0.8423)">MEDIOS</span>
<span class="t" style="left:429.20px;top:213.00px;font-size:6.9px;color:#404040;transform:scaleX(0.8842)">MEDIA</span>
<span class="c" style="left:487.00px;top:213.00px;font-size:6.9px;color:#404040;width:37.60px;height:7.9px"><span style="transform:scaleX(0.9418)">001 - A - FAC</span></span>
<span class="t" style="left:634.50px;top:213.00px;font-size:6.9px;color:#404040;transform:scaleX(0.9998)">Importación Automática</span>
<span class="t" style="left:718.20px;top:213.00px;font-size:6.9px;color:#404040;transform:scaleX(0.9024)">03 - T.V. POR CABLE</span>
<span class="t" style="left:249.20px;top:226.00px;font-size:6.9px;color:#404040;transform:scaleX(0.8206)">FACTURA</span>
<span class="t" style="left:387.00px;top:226.00px;font-size:6.9px;color:#404040;transform:scaleX(0.8423)">MEDIOS</span>
<span class="t" style="left:429.20px;top:225.00px;font-size:6.9px;color:#404040;transform:scaleX(0.8842)">MEDIA</span>
<span class="c" style="left:487.00px;top:226.00px;font-size:6.9px;color:#404040;width:37.60px;height:7.9px"><span style="transform:scaleX(0.9418)">001 - A - FAC</span></span>
<span class="t" style="left:634.50px;top:226.00px;font-size:6.9px;color:#404040;transform:scaleX(0.9998)">Importación Automática</span>
<span class="t" style="left:718.20px;top:226.00px;font-size:6.9px;color:#404040;transform:scaleX(0.8642)">36 - INTERNET</span>
<span class="t" style="left:249.20px;top:239.00px;font-size:6.9px;color:#404040;transform:scaleX(0.8206)">FACTURA</span>
<span class="t" style="left:387.00px;top:239.00px;font-size:6.9px;color:#404040;transform:scaleX(0.8423)">MEDIOS</span>
<span class="t" style="left:429.20px;top:238.00px;font-size:6.9px;color:#404040;transform:scaleX(0.8842)">MEDIA</span>
<span class="c" style="left:487.00px;top:238.00px;font-size:6.9px;color:#404040;width:37.60px;height:7.9px"><span style="transform:scaleX(0.9418)">201 - A - FAC</span></span>
<span class="t" style="left:634.50px;top:238.00px;font-size:6.9px;color:#404040;transform:scaleX(0.9998)">Importación Automática</span>
<span class="t" style="left:718.20px;top:238.00px;font-size:6.9px;color:#404040;transform:scaleX(0.9373)">02 - T.V.INTERIOR</span>
<span class="t" style="left:249.20px;top:251.00px;font-size:6.9px;color:#404040;transform:scaleX(0.8206)">FACTURA</span>
<span class="t" style="left:387.00px;top:251.00px;font-size:6.9px;color:#404040;transform:scaleX(0.8423)">MEDIOS</span>
<span class="t" style="left:429.20px;top:250.00px;font-size:6.9px;color:#404040;transform:scaleX(0.8842)">MEDIA</span>
<span class="c" style="left:487.00px;top:251.00px;font-size:6.9px;color:#404040;width:37.60px;height:7.9px"><span style="transform:scaleX(0.9418)">201 - A - FAC</span></span>
<span class="t" style="left:634.50px;top:251.00px;font-size:6.9px;color:#404040;transform:scaleX(0.9998)">Importación Automática</span>
<span class="t" style="left:718.20px;top:251.00px;font-size:6.9px;color:#404040;transform:scaleX(0.9373)">02 - T.V.INTERIOR</span>
<span class="t" style="left:249.20px;top:264.00px;font-size:6.9px;color:#404040;transform:scaleX(0.8206)">FACTURA</span>
<span class="t" style="left:387.00px;top:264.00px;font-size:6.9px;color:#404040;transform:scaleX(0.8423)">MEDIOS</span>
<span class="t" style="left:429.20px;top:263.00px;font-size:6.9px;color:#404040;transform:scaleX(0.8842)">MEDIA</span>
<span class="c" style="left:487.00px;top:263.00px;font-size:6.9px;color:#404040;width:37.60px;height:7.9px"><span style="transform:scaleX(0.9418)">201 - A - FAC</span></span>
<span class="t" style="left:634.50px;top:263.00px;font-size:6.9px;color:#404040;transform:scaleX(0.9998)">Importación Automática</span>
<span class="t" style="left:718.20px;top:263.00px;font-size:6.9px;color:#404040;transform:scaleX(0.9373)">02 - T.V.INTERIOR</span>
<span class="t" style="left:249.20px;top:276.00px;font-size:6.9px;color:#404040;transform:scaleX(0.8206)">FACTURA</span>
<span class="t" style="left:387.00px;top:276.00px;font-size:6.9px;color:#404040;transform:scaleX(0.8423)">MEDIOS</span>
<span class="t" style="left:429.20px;top:275.00px;font-size:6.9px;color:#404040;transform:scaleX(0.8842)">MEDIA</span>
<span class="c" style="left:487.00px;top:276.00px;font-size:6.9px;color:#404040;width:37.60px;height:7.9px"><span style="transform:scaleX(0.9418)">201 - A - FAC</span></span>
<span class="t" style="left:634.50px;top:276.00px;font-size:6.9px;color:#404040;transform:scaleX(0.9998)">Importación Automática</span>
<span class="t" style="left:718.20px;top:276.00px;font-size:6.9px;color:#404040;transform:scaleX(0.9373)">02 - T.V.INTERIOR</span>
<span class="t" style="left:249.20px;top:289.00px;font-size:6.9px;color:#404040;transform:scaleX(0.8206)">FACTURA</span>
<span class="t" style="left:387.00px;top:289.00px;font-size:6.9px;color:#404040;transform:scaleX(0.8423)">MEDIOS</span>
<span class="t" style="left:429.20px;top:288.00px;font-size:6.9px;color:#404040;transform:scaleX(0.8842)">MEDIA</span>
<span class="c" style="left:487.00px;top:288.00px;font-size:6.9px;color:#404040;width:37.60px;height:7.9px"><span style="transform:scaleX(0.9418)">201 - A - FAC</span></span>
<span class="t" style="left:634.50px;top:288.00px;font-size:6.9px;color:#404040;transform:scaleX(0.9998)">Importación Automática</span>
<span class="t" style="left:718.20px;top:288.00px;font-size:6.9px;color:#404040;transform:scaleX(0.9373)">02 - T.V.INTERIOR</span>
<span class="v" style="left:9.43px;top:53.70px;font-size:7px;transform:rotate(90deg) scaleX(0.9163)">Herramientas</span>
<span class="v" style="left:9.43px;top:109.50px;font-size:7px;transform:rotate(90deg) scaleX(0.8993)">Configuraciones</span>
</body></html>
